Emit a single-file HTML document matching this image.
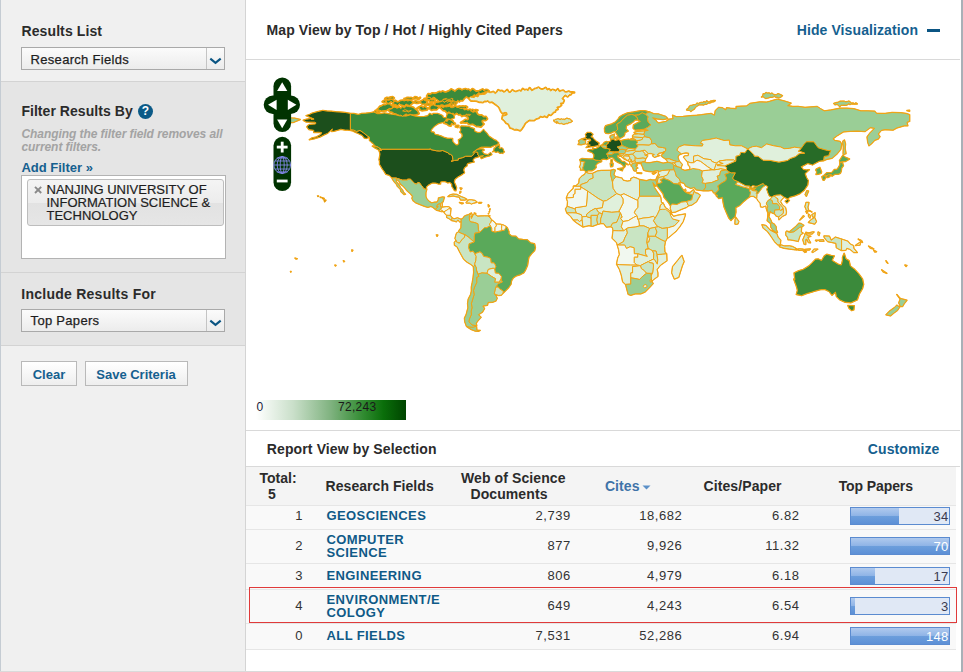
<!DOCTYPE html>
<html><head><meta charset="utf-8"><style>
html,body{margin:0;padding:0;}
body{width:963px;height:672px;overflow:hidden;position:relative;background:#fff;font-family:"Liberation Sans",sans-serif;}
</style></head><body>
<div style="position:absolute;left:0.00px;top:0.00px;width:245.00px;height:81.00px;background:#f0f0f0"></div>
<div style="position:absolute;left:0.00px;top:81.00px;width:245.00px;height:1.00px;background:#d3d3d3"></div>
<div style="position:absolute;left:0.00px;top:82.00px;width:245.00px;height:190.00px;background:#e5e5e5"></div>
<div style="position:absolute;left:0.00px;top:272.00px;width:245.00px;height:1.00px;background:#d3d3d3"></div>
<div style="position:absolute;left:0.00px;top:273.00px;width:245.00px;height:72.00px;background:#e5e5e5"></div>
<div style="position:absolute;left:0.00px;top:345.00px;width:245.00px;height:1.00px;background:#d3d3d3"></div>
<div style="position:absolute;left:0.00px;top:346.00px;width:245.00px;height:326.00px;background:#f0f0f0"></div>
<div style="position:absolute;left:0.00px;top:0.00px;width:1.00px;height:672.00px;background:#c5ccd3"></div>
<div style="position:absolute;left:245.00px;top:0.00px;width:1.00px;height:672.00px;background:#d4d4d4"></div>
<div style="position:absolute;top:24.15px;font-size:14px;line-height:14px;font-weight:bold;color:#2b2b2b;white-space:nowrap;letter-spacing:0.10px;left:21.50px;">Results List</div>
<div style="position:absolute;left:21.00px;top:47.00px;width:204.00px;height:23.00px;box-sizing:border-box;border:1px solid #a9a9a9;background:linear-gradient(#fbfbfb,#ececec)"></div>
<div style="position:absolute;left:206.00px;top:48.00px;width:1.00px;height:21.00px;background:#c4c4c4"></div>
<svg style="position:absolute;left:209px;top:57px" width="14" height="10" viewBox="0 0 14 10"><path d="M1.3,1.6 L6.5,5.9 L11.7,1.6" fill="none" stroke="#0b5583" stroke-width="2.1"/></svg>
<div style="position:absolute;top:52.60px;font-size:13px;line-height:13px;font-weight:normal;color:#1e1e1e;white-space:nowrap;letter-spacing:0.30px;left:30.60px;-webkit-text-stroke:0.25px #1e1e1e;">Research Fields</div>
<div style="position:absolute;top:103.65px;font-size:14px;line-height:14px;font-weight:bold;color:#2b2b2b;white-space:nowrap;letter-spacing:0.05px;left:21.40px;">Filter Results By</div>
<div style="position:absolute;left:138px;top:104px;width:15px;height:15px;border-radius:50%;background:#0b5a87;color:#fff;font-size:12px;font-weight:bold;line-height:15px;text-align:center">?</div>
<div style="position:absolute;top:128.34px;font-size:12px;line-height:12px;font-weight:bold;color:#a3a3a3;white-space:nowrap;font-style:italic;letter-spacing:-0.06px;left:21.40px;">Changing the filter field removes all</div>
<div style="position:absolute;top:141.34px;font-size:12px;line-height:12px;font-weight:bold;color:#a3a3a3;white-space:nowrap;font-style:italic;letter-spacing:-0.06px;left:21.40px;">current filters.</div>
<div style="position:absolute;top:161.00px;font-size:13px;line-height:13px;font-weight:bold;color:#15608f;white-space:nowrap;left:21.40px;">Add Filter &raquo;</div>
<div style="position:absolute;left:21.00px;top:175.00px;width:205.00px;height:84.00px;box-sizing:border-box;border:1px solid #b3b3b3;background:#fff"></div>
<div style="position:absolute;left:27.00px;top:179.00px;width:197.00px;height:46.50px;box-sizing:border-box;border:1px solid #bdbdbd;border-radius:3px;background:linear-gradient(#f4f4f4 0%,#ececec 50%,#e2e2e2 51%,#e6e6e6 100%)"></div>
<svg style="position:absolute;left:33px;top:185px" width="10" height="10"><path d="M2,1.8 L8.2,8 M8.2,1.8 L2,8" stroke="#8a8a8a" stroke-width="1.9"/></svg>
<div style="position:absolute;top:183.20px;font-size:13px;line-height:13px;font-weight:normal;color:#1e1e1e;white-space:nowrap;left:46.50px;-webkit-text-stroke:0.2px #1e1e1e;">NANJING UNIVERSITY OF</div>
<div style="position:absolute;top:195.90px;font-size:13px;line-height:13px;font-weight:normal;color:#1e1e1e;white-space:nowrap;left:46.50px;-webkit-text-stroke:0.2px #1e1e1e;">INFORMATION SCIENCE &amp;</div>
<div style="position:absolute;top:208.60px;font-size:13px;line-height:13px;font-weight:normal;color:#1e1e1e;white-space:nowrap;left:46.50px;-webkit-text-stroke:0.2px #1e1e1e;">TECHNOLOGY</div>
<div style="position:absolute;top:286.65px;font-size:14px;line-height:14px;font-weight:bold;color:#2b2b2b;white-space:nowrap;letter-spacing:0.25px;left:21.30px;">Include Results For</div>
<div style="position:absolute;left:21.00px;top:309.00px;width:204.00px;height:22.50px;box-sizing:border-box;border:1px solid #a9a9a9;background:linear-gradient(#fbfbfb,#ececec)"></div>
<div style="position:absolute;left:206.00px;top:310.00px;width:1.00px;height:20.50px;background:#c4c4c4"></div>
<svg style="position:absolute;left:209px;top:319px" width="14" height="10" viewBox="0 0 14 10"><path d="M1.3,1.6 L6.5,5.9 L11.7,1.6" fill="none" stroke="#0b5583" stroke-width="2.1"/></svg>
<div style="position:absolute;top:314.30px;font-size:13px;line-height:13px;font-weight:normal;color:#1e1e1e;white-space:nowrap;letter-spacing:0.30px;left:30.60px;-webkit-text-stroke:0.25px #1e1e1e;">Top Papers</div>
<div style="position:absolute;left:21.00px;top:361.00px;width:56.00px;height:24.50px;box-sizing:border-box;border:1px solid #b9b9b9;background:linear-gradient(#ffffff,#eeeeee)"></div>
<div style="position:absolute;left:21px;width:56px;top:368.00px;font-size:13px;line-height:13px;font-weight:bold;color:#15608f;text-align:center;white-space:nowrap">Clear</div>
<div style="position:absolute;left:85.00px;top:361.00px;width:102.50px;height:24.50px;box-sizing:border-box;border:1px solid #b9b9b9;background:linear-gradient(#ffffff,#eeeeee)"></div>
<div style="position:absolute;left:85px;width:102px;top:368.00px;font-size:13px;line-height:13px;font-weight:bold;color:#15608f;text-align:center;white-space:nowrap">Save Criteria</div>
<div style="position:absolute;left:961.00px;top:0.00px;width:2.00px;height:672.00px;background:#a9b0b7"></div>
<div style="position:absolute;top:23.15px;font-size:14px;line-height:14px;font-weight:bold;color:#2b2b2b;white-space:nowrap;letter-spacing:0.12px;left:266.50px;">Map View by Top / Hot / Highly Cited Papers</div>
<div style="position:absolute;top:23.15px;font-size:14px;line-height:14px;font-weight:bold;color:#15608f;white-space:nowrap;letter-spacing:0.10px;left:796.70px;">Hide Visualization</div>
<div style="position:absolute;left:927.00px;top:28.50px;width:13.00px;height:3.50px;background:#0b5583"></div>
<div style="position:absolute;left:246.00px;top:59.00px;width:714.00px;height:1.00px;background:#d9d9d9"></div>
<div style="position:absolute;left:246px;top:60px;width:714px;height:370px;overflow:hidden"><svg width="714" height="370" viewBox="246 60 714 370"><g stroke="#f2a312" stroke-width="1" stroke-linejoin="round"><path fill="none" stroke-width="1.5" d="M381.7,149.2L430.2,149.2L430.2,148.5L430.9,149.6L436.6,150.8L439.9,151.0L442.7,150.5L448.3,152.9L448.6,153.8L450.4,154.3L452.3,155.7L453.0,159.7L451.2,161.4L454.5,160.4L458.4,160.0L458.0,158.8L462.7,157.6L465.7,156.2L471.4,156.2L472.8,155.3L474.1,153.2L475.5,152.0L477.2,152.2L477.9,152.6L477.9,155.0L479.3,156.2L479.3,156.6L476.2,157.4L474.1,158.3L472.8,160.4L473.9,161.4L474.2,162.0L471.4,162.5L468.0,163.4L467.1,163.9L467.1,165.8L465.5,166.8L464.5,167.5L463.6,170.1L464.5,172.8L462.7,174.0L460.3,175.5L458.0,176.8L454.9,179.2L454.2,182.0L455.6,185.0L456.6,187.9L455.9,190.7L454.5,190.5L453.5,188.8L451.9,186.3L451.8,184.1L450.0,182.3L447.9,182.9L445.3,181.6L441.8,181.6L440.4,182.0L440.6,183.9L438.3,183.9L435.7,183.0L432.6,182.9L430.9,183.6L427.9,185.3L426.3,187.0L426.7,189.5L423.4,188.6L422.7,186.7L421.3,185.3L419.4,182.7L417.6,182.7L416.6,184.1L414.8,183.6L413.6,182.5L410.5,179.2L407.5,179.2L407.5,180.1L402.5,180.1L396.0,178.0L392.0,178.0L389.6,175.4L385.9,174.3L383.8,170.8L382.6,169.3L381.7,167.9L380.3,165.3L379.5,164.2L379.6,161.4L379.1,159.7L380.0,154.1L379.5,151.9L378.8,150.3L381.4,150.6L382.1,149.2ZM350.4,113.4L350.4,129.6L353.9,130.1L356.5,131.5L360.0,130.4L363.4,132.7L367.8,136.2L369.5,137.2L366.4,138.4L364.3,138.1L362.2,135.3L360.0,134.4L358.2,133.4L356.0,132.5L352.5,130.8L347.8,130.1L345.2,130.1L340.8,129.2L338.2,130.1L333.8,131.3L331.6,131.5L332.4,128.9L329.5,131.5L327.4,133.4L323.7,135.0L319.9,137.0L314.1,138.8L309.3,139.7L312.1,137.9L316.4,137.0L321.1,134.3L321.6,132.5L318.2,132.2L313.8,132.5L313.8,130.3L308.9,129.6L307.7,128.0L306.8,126.9L307.7,125.7L309.4,124.5L315.5,124.0L315.9,122.8L314.7,122.2L308.6,122.1L306.0,121.9L303.2,120.3L306.5,119.3L310.3,118.6L311.2,119.5L314.1,119.1L310.7,117.5L306.0,115.6L309.4,114.6L312.1,113.2L317.3,111.8L322.9,110.4L326.9,111.1L331.2,111.3L335.6,111.8L339.9,112.1L345.2,112.5ZM479.3,156.2L477.9,155.0L477.9,152.6L477.2,152.2L475.5,152.0L474.1,153.2L472.8,155.3L471.4,156.2L465.7,156.2L462.7,157.6L458.0,158.8L458.4,160.0L454.5,160.4L451.2,161.4L453.0,159.7L452.3,155.7L450.4,154.3L448.6,153.8L448.3,152.9L442.7,150.5L439.9,151.0L436.6,150.8L430.9,149.6L430.2,148.5L430.2,149.2L381.7,149.2L381.2,149.1L379.1,147.8L377.4,146.8L374.8,145.8L373.4,143.7L371.6,142.3L369.5,140.5L369.5,137.2L367.8,136.2L363.4,132.7L360.0,130.4L356.5,131.5L353.9,130.1L350.4,129.6L350.4,113.4L353.9,113.5L358.2,114.6L361.7,113.4L366.1,113.2L370.4,112.7L373.9,112.1L377.4,113.7L380.9,113.7L384.3,113.0L390.4,114.1L395.7,114.8L399.2,115.8L406.1,116.1L410.5,114.8L414.8,116.1L419.2,116.7L424.4,116.5L427.9,115.8L429.6,113.5L432.3,114.8L433.1,113.5L437.5,113.5L440.1,114.4L442.7,115.6L443.1,117.5L446.2,117.9L447.1,114.4L448.8,113.0L452.3,113.9L454.0,115.8L454.4,117.9L450.5,119.3L446.5,118.8L445.3,120.8L443.6,122.2L440.1,123.1L438.0,123.8L435.2,125.7L433.1,127.5L431.4,129.7L431.0,131.8L434.0,132.3L434.9,134.4L438.3,135.1L441.0,136.0L443.6,137.2L447.1,138.3L450.5,138.4L452.6,138.6L452.6,141.4L454.0,143.1L455.8,144.9L457.9,144.9L458.9,143.1L458.4,140.0L461.0,138.3L462.4,136.2L461.9,133.6L459.8,132.2L461.0,130.1L460.1,127.5L461.0,126.1L465.4,126.2L468.8,126.4L471.4,127.8L474.4,128.7L474.6,131.3L476.7,132.2L478.9,132.7L481.0,132.2L482.8,130.4L483.6,129.6L484.9,131.3L487.1,133.6L488.9,136.2L491.5,137.9L494.1,139.7L496.2,140.5L498.8,143.1L496.4,144.9L493.6,145.8L490.6,147.2L485.4,147.0L481.0,147.2L478.4,148.5L474.9,151.2L472.7,152.7L476.7,149.4L481.0,148.9L483.6,149.2L484.2,150.1L481.9,151.0L483.1,152.7L484.0,153.9L488.0,154.8L490.6,152.7L491.8,154.5L489.7,155.7L485.4,156.9L481.4,158.6L480.7,157.3L483.6,155.7L481.0,155.9ZM372.3,146.1L378.2,147.2L381.2,150.3L378.6,149.9L374.4,147.5ZM492.7,151.7L493.9,150.8L494.1,149.2L494.2,148.0L495.6,147.7L495.8,146.6L497.1,146.1L498.3,145.6L499.3,144.7L499.5,146.3L498.8,147.7L500.0,148.4L501.6,147.9L502.8,148.7L503.3,149.8L503.6,150.9L504.4,151.9L503.2,152.2L502.8,153.4L501.7,152.9L500.5,153.2L499.3,152.9L498.4,151.7L497.3,151.8L496.1,152.3L495.0,151.8L493.8,151.2ZM388.7,110.0L390.4,111.8L392.5,112.0L393.9,113.4L395.8,113.7L397.5,114.5L399.2,115.3L400.9,115.2L402.7,116.3L404.4,115.0L406.1,113.9L407.9,115.1L409.9,114.2L411.9,114.7L414.0,114.9L415.6,114.6L417.2,114.2L418.7,113.5L417.4,110.9L415.8,109.9L414.4,108.8L413.1,107.4L411.0,106.8L408.7,106.6L406.3,106.1L404.4,107.8L402.7,106.8L400.8,108.5L399.2,107.4L396.9,108.2L394.8,107.1L393.1,107.5L391.6,109.0L389.6,108.3ZM377.4,109.4L378.8,108.1L380.0,106.6L381.8,106.1L383.3,105.0L385.2,105.0L387.4,104.0L389.4,104.1L391.3,105.7L393.0,106.6L394.8,106.9L393.0,106.5L391.9,108.2L390.5,109.2L388.7,108.8L386.1,110.4L383.9,110.6L381.7,110.9L379.5,110.2ZM481.0,126.8L482.2,125.3L483.6,124.0L482.0,122.6L481.9,120.5L483.6,119.9L485.7,120.2L487.1,118.8L485.9,116.8L483.6,117.0L481.8,115.4L479.3,115.3L477.4,114.5L476.7,112.7L475.1,111.6L473.0,112.3L471.4,111.3L470.1,109.6L467.9,110.2L466.2,109.5L464.2,110.0L463.1,107.3L461.0,108.1L459.6,106.6L457.5,106.9L455.8,106.4L454.2,107.0L452.7,107.6L451.1,107.6L449.5,106.5L447.9,106.6L446.4,106.9L444.8,106.7L443.3,107.7L441.6,106.8L440.1,107.4L441.8,108.6L443.1,110.3L445.3,110.6L447.1,112.7L449.2,111.7L451.1,113.6L453.2,113.2L454.7,114.3L456.9,112.9L458.4,114.4L460.7,114.2L461.9,116.1L464.0,115.1L466.2,116.1L467.7,116.8L468.8,117.9L468.0,120.0L465.6,119.7L463.6,121.0L461.0,122.6L463.2,122.2L465.4,122.6L467.4,122.2L468.7,124.0L470.6,124.3L472.9,123.9L474.9,125.2L476.5,126.2L478.4,126.2ZM439.2,101.3L441.0,101.1L442.7,101.0L444.4,102.3L446.2,101.0L447.9,102.4L449.7,100.4L451.4,101.7L453.0,100.3L454.6,102.6L456.1,101.9L457.7,100.3L459.3,101.5L460.3,100.3L462.5,100.5L463.5,99.2L464.5,97.9L466.4,96.5L468.6,97.9L470.6,97.0L472.5,96.1L474.1,94.7L475.8,95.2L477.3,94.2L478.6,92.6L480.5,93.6L482.1,93.1L483.6,92.6L485.2,91.5L487.0,91.3L488.9,91.2L487.4,90.0L485.9,89.7L484.1,91.0L482.7,89.3L481.0,90.2L479.3,90.9L477.5,91.4L475.8,91.4L474.1,90.0L472.3,89.0L470.5,91.2L468.8,89.6L467.1,89.8L465.3,89.0L463.6,89.4L461.9,90.3L460.1,89.1L458.3,89.0L456.6,90.1L454.9,91.6L453.2,90.4L451.3,89.3L449.7,90.7L448.0,91.5L446.3,92.3L444.5,92.2L442.7,91.4L441.0,92.2L439.2,91.8L437.1,92.9L434.9,93.5L432.5,93.2L430.5,94.4L428.2,94.1L427.0,96.1L428.3,97.6L429.9,97.5L431.2,98.6L433.1,97.9L435.3,98.6L437.5,99.6ZM434.9,104.5L436.4,105.9L438.0,105.4L439.5,105.5L441.1,104.8L442.7,104.8L444.5,105.6L446.2,105.0L447.9,104.7L449.7,103.5L451.4,105.4L453.1,103.5L454.9,104.6L456.6,102.7L455.1,101.2L453.4,100.9L451.3,102.5L449.7,101.5L447.9,100.2L446.2,101.0L444.5,102.2L442.7,100.5L441.0,101.7L439.2,102.0L437.5,102.6L435.7,102.2ZM393.1,103.9L394.6,104.2L396.1,104.7L397.6,105.5L399.4,103.6L400.9,104.8L402.7,105.1L404.5,105.8L406.1,104.0L407.9,105.0L409.7,105.3L411.3,103.9L413.1,102.6L411.6,101.3L410.0,100.2L407.9,101.0L406.1,100.3L404.4,100.9L402.6,100.5L400.8,100.7L399.2,101.7L397.1,102.2L395.1,100.9L393.1,101.9ZM417.4,108.3L419.3,107.4L420.4,109.8L421.9,110.4L423.6,110.1L425.3,110.0L426.9,109.7L427.9,108.3L425.9,107.9L425.3,106.0L423.5,107.7L421.1,106.3L419.2,107.1ZM429.6,108.3L431.6,109.9L434.0,109.2L436.6,109.5L438.3,107.4L436.6,105.7L434.9,105.8L433.1,104.7L431.4,105.7L430.3,106.8ZM444.4,123.1L446.1,123.5L447.5,124.2L448.8,125.2L450.6,125.7L451.5,123.1L453.5,124.3L454.9,123.5L453.3,122.5L452.4,120.7L450.5,120.0L448.7,119.1L447.2,121.5L445.3,120.5ZM419.2,102.2L420.9,102.5L422.5,103.9L424.3,104.0L426.2,103.6L427.0,101.3L425.3,100.8L423.7,99.8L421.8,100.8ZM382.6,101.7L384.3,102.2L386.2,100.9L387.7,103.7L389.6,102.6L390.9,101.3L392.9,102.8L394.4,102.1L395.7,100.8L393.5,101.1L392.2,99.4L390.6,99.7L389.1,100.2L387.5,100.2L385.9,100.4L384.3,100.5ZM424.4,98.7L426.2,98.5L427.9,99.5L429.6,100.0L431.4,99.6L433.3,97.9L435.7,98.4L433.9,97.0L431.5,98.8L429.6,97.3L427.7,97.1L426.5,99.5ZM412.2,98.7L414.3,98.4L416.3,98.1L418.3,99.1L420.1,97.7L418.1,98.8L416.6,97.2L414.8,97.0L413.8,98.2ZM455.8,126.6L457.5,127.1L458.4,125.9L456.6,125.7ZM404.4,98.7L405.7,99.4L407.2,99.0L408.6,99.1L409.9,99.9L411.3,99.6L412.4,98.4L414.0,98.2L412.5,98.5L411.2,97.8L409.8,98.1L408.4,97.8L407.0,97.7L405.8,98.6ZM427.0,100.5L428.9,99.9L430.4,101.5L432.3,101.2L433.9,101.4L434.9,100.1L433.1,99.8L431.4,100.0L429.6,99.6ZM442.7,99.6L444.2,99.1L445.7,99.4L447.0,100.5L448.5,100.4L449.9,100.7L451.4,100.5L453.2,99.1L451.8,98.3L450.3,99.2L448.9,99.4L447.5,99.2L446.2,98.4L444.5,99.1ZM385.2,98.7L386.6,98.7L388.0,99.6L389.4,98.5L390.8,98.8L392.2,99.1L393.9,98.0L392.6,97.1L391.2,97.3L389.8,97.6L388.3,98.2L387.0,97.7ZM413.1,102.2L414.8,102.4L416.5,103.0L418.3,102.9L420.1,101.9L418.5,102.4L417.1,101.8L415.7,101.2L414.4,101.7ZM425.3,104.3L426.7,104.4L428.2,105.0L429.6,104.8L431.0,104.2L432.3,103.6L430.5,103.8L428.7,103.9L427.0,103.1ZM456.6,107.4L458.1,107.3L459.4,108.0L460.8,108.5L462.2,108.3L463.6,108.1L465.6,108.3L467.1,107.1L465.8,106.3L464.3,106.8L463.0,106.2L461.5,106.6L460.1,106.6L458.3,106.7ZM470.6,110.9L472.3,111.2L474.1,110.9L475.8,111.3L477.5,110.2L475.8,110.0L474.0,110.7L472.3,109.7ZM402.6,110.9L404.0,111.2L405.4,111.5L406.8,111.1L408.2,112.1L409.6,111.4L411.3,110.4L409.9,110.9L408.5,111.0L407.1,110.6L405.8,109.8L404.4,109.9ZM374.8,111.8L376.2,112.7L377.7,111.3L379.1,112.1L380.0,111.1L378.6,110.8L377.0,111.7L375.6,110.7ZM465.4,115.3L466.9,114.7L468.2,115.8L469.7,115.6L470.6,114.6L469.1,114.3L467.7,114.4L466.2,114.2ZM449.7,103.9L451.4,103.9L453.2,104.3L454.9,103.6L453.5,102.9L452.0,103.1L450.5,103.3ZM491.5,94.4L493.3,94.2L495.0,94.7L495.8,93.8L494.0,94.4L492.4,93.5ZM520.2,130.4L518.5,129.8L516.7,129.2L514.4,129.4L512.4,128.3L510.3,127.8L509.4,125.7L508.4,123.8L506.3,123.1L504.5,120.5L502.3,118.8L502.8,116.1L505.0,115.6L507.2,114.8L506.8,112.7L504.9,112.3L502.7,113.3L501.1,111.4L500.2,109.5L499.3,107.4L497.6,105.7L495.8,104.4L494.1,103.1L492.1,101.8L489.7,102.2L488.1,100.6L486.3,101.1L484.6,101.0L482.8,102.2L481.0,101.9L479.0,101.9L477.2,101.0L475.2,100.8L473.2,100.8L471.1,100.7L469.7,99.1L468.8,97.9L470.4,96.9L472.4,97.4L474.3,97.6L475.8,96.1L477.9,97.0L479.2,94.7L481.0,94.6L482.8,94.4L484.6,94.4L486.2,93.6L487.7,91.8L489.7,92.7L491.5,92.6L493.1,91.8L495.2,93.6L496.8,92.5L498.2,90.2L500.2,91.2L501.9,90.9L503.7,92.3L505.4,91.7L507.2,89.9L508.9,92.6L510.6,92.4L512.4,90.2L514.1,91.4L516.0,91.9L517.7,91.2L519.3,90.6L521.2,91.4L522.7,88.9L524.6,90.2L526.3,89.7L528.1,90.7L529.7,88.0L531.6,90.8L533.3,90.0L535.0,88.8L536.7,88.5L538.4,87.6L540.3,89.0L542.0,89.5L543.7,89.1L545.6,87.8L547.2,90.1L549.0,89.2L550.6,91.1L552.5,89.7L554.1,90.2L555.8,91.3L557.8,89.2L559.3,91.7L561.2,90.9L563.1,90.5L564.8,92.1L566.7,92.2L568.7,91.5L570.4,92.4L572.3,92.4L574.2,92.5L572.0,92.5L570.7,94.4L569.0,94.8L567.6,96.5L565.3,94.9L563.8,96.1L562.0,98.7L563.8,100.5L562.9,102.9L560.3,103.1L561.2,105.2L559.2,106.6L556.8,107.1L557.7,109.2L555.6,109.8L555.1,111.8L553.2,112.2L552.1,113.8L550.7,114.9L548.5,114.2L546.9,117.0L544.6,115.8L542.5,116.8L540.3,116.1L538.5,118.1L535.9,118.8L534.0,120.3L531.5,120.2L529.2,120.0L527.2,121.4L525.1,123.1L523.7,125.7L522.0,128.3ZM553.7,120.3L554.8,120.4L555.6,119.4L556.7,119.3L557.7,118.9L558.9,119.1L560.1,119.7L561.3,119.0L562.5,119.4L563.8,119.3L564.9,119.8L565.9,118.6L567.0,118.2L568.1,118.8L569.5,119.0L570.7,119.6L571.1,120.8L572.3,121.2L571.1,122.0L569.9,122.6L568.7,122.3L567.9,123.4L566.8,123.2L565.8,123.6L564.8,123.8L563.8,124.2L562.7,123.8L561.7,123.2L560.5,123.5L559.4,123.5L558.0,122.6L556.5,123.1L557.7,121.7L556.5,121.3L555.3,122.1L554.2,121.4ZM392.0,178.0L396.0,178.0L402.5,180.1L407.5,180.1L407.5,179.2L410.5,179.2L413.6,182.5L414.8,183.6L416.6,184.1L417.6,182.7L419.4,182.7L421.3,185.3L422.7,186.7L423.4,188.6L426.7,189.5L425.8,192.8L425.8,196.3L426.7,198.7L428.8,201.2L431.4,202.9L434.9,202.2L437.0,202.2L438.3,200.1L438.5,198.0L442.7,197.1L444.4,197.3L443.6,199.8L443.1,201.9L442.2,202.4L440.8,203.6L437.5,204.5L436.8,206.6L438.3,206.7L435.4,209.3L433.1,207.4L430.9,206.4L427.9,207.3L424.4,206.2L420.1,204.5L415.7,202.7L413.1,200.6L412.0,198.4L412.6,196.3L410.5,193.7L407.0,190.7L405.3,188.4L403.2,186.2L400.5,184.1L398.8,180.9L396.0,179.2L396.4,181.8L398.6,184.4L400.5,187.6L402.6,190.2L403.5,192.3L405.4,194.2L404.0,194.5L400.9,191.4L400.4,189.3L397.1,186.0L396.9,184.8L394.3,181.8L392.7,179.6ZM435.4,209.3L438.3,206.7L436.8,206.6L437.5,204.5L440.8,203.6L440.6,206.9L442.4,207.3L440.4,209.5L439.0,210.7L436.6,210.2ZM440.8,203.6L442.2,202.4L442.2,206.7L440.6,206.9ZM440.4,209.5L442.4,207.3L446.2,206.7L448.8,206.9L450.9,208.5L448.5,209.0L446.2,210.6L443.9,211.8L443.2,211.4ZM439.0,210.7L440.4,209.5L443.2,211.4L441.3,211.6ZM443.9,211.8L446.2,210.6L448.5,209.0L450.9,208.5L450.5,212.8L450.2,215.4L446.7,215.3L444.8,213.3ZM446.7,215.3L450.2,215.4L452.1,217.9L451.6,220.5L449.7,218.9L446.7,217.4ZM452.1,217.9L454.0,218.9L457.5,217.9L461.2,219.4L461.3,221.5L459.8,221.9L457.9,219.8L456.3,221.7L454.5,221.0L451.6,220.5ZM488.9,217.2L489.9,215.8L488.2,216.0ZM488.3,213.7L488.7,213.3L488.5,213.9ZM489.2,211.6L489.6,211.3L489.4,212.0ZM489.6,209.5L490.1,208.8L489.7,210.2ZM488.3,206.7L489.4,205.9L488.7,206.9ZM488.0,205.0L488.5,204.8L488.2,205.2ZM474.2,213.0L475.8,213.5L474.9,213.5ZM447.9,196.5L450.5,194.7L453.2,194.2L456.6,194.4L461.0,196.6L464.5,198.0L466.9,199.4L464.5,199.9L460.6,199.9L459.3,197.1L455.8,196.6L453.2,195.8L449.7,196.5ZM466.2,202.5L468.8,199.9L471.4,199.9L474.9,200.5L477.0,202.2L474.1,202.9L471.4,203.9L469.7,202.9L466.4,202.9ZM459.4,202.5L463.3,203.2L461.9,203.8ZM478.9,202.4L481.7,202.5L481.0,203.2L478.9,203.2ZM460.1,187.9L461.9,188.3L461.0,189.7ZM460.1,191.4L461.0,191.9L459.8,193.3ZM506.1,226.9L507.2,227.6L508.9,231.5L508.9,233.7L511.5,236.0L515.9,236.3L518.5,239.0L522.8,239.5L527.2,239.8L530.7,243.0L534.5,243.7L535.4,247.7L534.5,250.8L531.5,253.8L528.9,257.2L528.1,261.6L527.5,265.4L525.4,270.3L523.7,272.9L520.2,274.7L516.7,275.7L513.3,277.8L511.5,280.8L511.0,284.2L508.6,287.7L506.3,290.0L503.0,293.3L503.3,291.2L499.3,288.6L498.4,287.0L495.7,287.2L498.4,283.4L502.3,282.0L500.9,279.2L501.4,276.4L498.8,273.4L495.3,273.1L494.6,269.1L495.8,266.3L494.3,263.0L491.1,262.8L490.6,258.5L488.0,257.2L483.6,256.4L482.2,253.6L480.0,251.8L474.8,253.8L473.0,251.1L470.2,252.0L468.5,247.7L469.0,243.7L474.1,241.9L474.2,236.7L474.9,232.9L479.3,232.5L479.6,232.5L484.5,227.6L486.8,227.6L490.4,225.5L491.8,228.5L491.8,231.1L495.0,232.0L498.4,231.3L501.9,230.6ZM491.5,219.8L494.1,221.9L496.2,224.1L496.4,225.9L495.0,227.6L495.0,232.0L491.8,231.1L491.8,228.5L490.4,225.5L489.2,224.1L490.6,222.8ZM496.2,224.1L500.2,224.3L501.9,224.7L501.6,228.3L501.9,230.6L498.4,231.3L495.0,232.0L495.0,227.6L496.4,225.9ZM501.9,224.7L502.8,224.8L505.4,226.1L506.1,226.9L504.5,230.2L501.9,230.6L501.6,228.3ZM471.4,213.0L472.3,215.4L470.8,216.3L471.4,218.6L473.2,214.9L474.4,213.9L477.5,216.3L481.0,216.1L484.5,216.0L488.0,216.0L489.7,217.5L491.5,219.8L490.6,222.8L489.2,224.1L490.4,225.5L486.8,227.6L484.5,227.6L479.6,232.5L479.3,232.5L478.4,229.7L477.9,223.8L474.1,222.4L470.6,221.9L469.7,220.7L469.2,217.2L469.7,215.4ZM461.2,219.4L463.1,218.2L464.5,216.1L466.6,215.3L468.8,214.6L471.4,213.0L469.7,215.4L469.2,217.2L469.7,220.7L470.6,221.9L474.1,222.4L477.9,223.8L478.4,229.7L479.3,232.5L474.9,232.9L474.2,236.7L474.1,241.9L470.6,239.0L468.0,236.7L465.0,234.8L461.0,233.2L458.4,232.0L459.3,230.2L461.0,228.0L461.2,223.3ZM456.1,240.5L455.1,238.4L455.8,235.5L456.6,233.2L458.4,232.0L461.0,233.2L465.0,234.8L464.5,237.2L461.9,239.8L459.3,243.3L457.5,242.4L456.6,242.1ZM456.1,240.5L456.6,242.1L457.5,242.4L459.3,243.3L461.9,239.8L464.5,237.2L465.0,234.8L468.0,236.7L470.6,239.0L474.1,241.9L469.0,243.7L468.5,247.7L470.2,252.0L473.0,251.1L474.8,253.8L476.2,256.4L475.8,260.7L474.9,263.3L474.9,265.1L473.4,266.5L471.4,264.7L467.1,262.1L463.6,259.0L461.9,255.9L459.3,251.1L457.2,246.8L454.5,245.1L454.4,242.4ZM474.8,253.8L480.0,251.8L482.2,253.6L483.6,256.4L488.0,257.2L490.6,258.5L491.1,262.8L494.3,263.0L495.8,266.3L494.6,269.1L493.2,268.2L488.3,269.4L487.0,273.3L481.9,272.9L477.9,274.3L476.7,271.2L476.3,267.7L474.9,265.1L474.9,263.3L475.8,260.7L476.2,256.4ZM494.6,269.1L495.3,273.1L498.8,273.4L501.4,276.4L500.9,279.2L499.3,282.2L494.6,282.2L495.5,278.7L491.5,276.4L487.0,273.3L488.3,269.4L493.2,268.2ZM503.0,293.3L503.3,291.2L499.3,288.6L498.4,287.0L495.7,287.2L494.6,292.1L494.3,293.8L496.7,294.7L498.4,295.4L501.1,295.2ZM476.7,271.2L477.9,274.3L481.9,272.9L487.0,273.3L491.5,276.4L495.5,278.7L494.6,282.2L499.3,282.2L500.9,279.2L502.3,282.0L498.4,283.4L495.7,287.2L494.6,292.1L494.3,293.8L496.4,296.4L497.1,298.4L495.7,301.1L492.4,302.2L488.0,302.4L487.5,305.2L482.8,306.0L484.5,308.6L482.4,312.1L478.4,314.7L481.0,317.3L477.9,320.8L476.2,323.1L476.7,325.7L472.3,325.2L470.6,323.4L468.8,321.7L469.7,318.2L471.3,314.7L471.1,311.2L472.0,307.8L471.4,303.4L472.7,299.1L474.1,294.7L473.5,290.3L474.6,286.9L476.7,282.5L476.7,277.3L478.8,276.4ZM473.4,266.5L474.9,265.1L476.3,267.7L476.7,271.2L478.8,276.4L476.7,277.3L476.7,282.5L474.6,286.9L473.5,290.3L474.1,294.7L472.7,299.1L471.4,303.4L472.0,307.8L471.1,311.2L471.3,314.7L469.7,318.2L468.8,321.7L470.6,323.4L472.3,325.2L476.7,325.7L474.1,327.3L470.6,327.8L466.6,326.6L464.8,321.7L464.5,318.2L466.2,314.7L467.1,311.2L468.0,307.8L467.6,303.4L468.3,299.1L470.6,294.7L471.4,291.2L471.4,286.9L472.3,282.5L473.2,277.3L473.7,272.1ZM476.5,326.2L476.8,330.2L480.2,330.4L478.4,331.3L474.9,330.9L471.4,329.5L467.1,326.9L473.2,327.3ZM324.1,199.9L326.0,200.3L324.6,201.7ZM322.0,197.7L324.2,198.4L323.2,198.9ZM320.2,197.0L321.3,197.5L320.4,197.5ZM317.6,195.9L318.5,196.1L318.0,196.5ZM436.4,234.9L437.8,235.1L437.1,236.3ZM334.9,265.1L336.1,265.4L335.4,266.0ZM351.8,249.9L352.8,250.3L352.1,251.3ZM343.4,260.7L344.5,261.3L343.8,261.8ZM295.0,258.1L297.2,258.8L295.9,259.0ZM290.5,271.4L291.1,271.5L290.8,272.1ZM580.5,161.6L580.7,164.0L580.1,165.8L579.5,167.0L580.7,168.1L580.5,170.1L583.1,169.8L582.9,167.5L583.8,165.4L584.0,163.2L585.2,162.1L581.7,161.3ZM580.5,161.6L581.7,161.3L585.2,162.1L584.0,163.2L583.8,165.4L582.9,167.5L583.1,169.8L584.9,170.5L586.2,171.9L588.2,170.7L592.2,170.7L594.8,169.1L596.3,167.2L595.5,165.8L597.4,163.2L601.6,161.6L601.6,160.7L598.6,160.4L596.0,160.2L592.9,159.0L588.2,159.0L582.1,158.5L579.8,159.7ZM592.9,159.0L596.0,160.2L598.6,160.4L601.6,160.7L601.4,159.5L603.8,159.0L606.5,159.5L609.1,158.3L607.5,156.0L608.2,154.6L606.5,154.1L609.2,151.7L610.3,149.2L607.1,148.4L606.1,148.4L603.3,147.7L600.4,145.6L598.6,147.2L596.3,148.4L594.3,148.7L592.7,148.0L593.2,149.9L590.8,149.6L588.2,149.9L587.8,151.0L592.2,152.6L593.9,154.5L593.9,156.9ZM611.0,159.7L612.5,159.9L612.2,162.5L611.0,162.0ZM600.4,145.6L603.3,147.7L606.1,148.4L606.6,147.3L606.8,146.1L606.3,145.8L604.7,145.1L601.9,145.1ZM601.9,145.1L604.7,145.1L606.3,145.8L606.5,144.4L608.2,143.7L608.5,141.9L606.1,141.6L604.2,142.4L603.0,144.2ZM606.5,144.4L606.3,145.8L606.8,146.1L606.6,147.3L607.1,148.4L610.3,149.2L609.2,151.7L612.7,151.9L614.3,151.9L618.6,151.9L620.0,149.6L617.3,147.0L622.1,145.6L621.4,143.0L620.7,140.7L618.6,139.7L615.2,140.5L613.2,139.1L611.0,139.0L610.8,141.2L608.5,141.9L608.2,143.7ZM611.0,139.0L613.2,139.1L614.3,137.9L613.9,136.2L614.5,134.1L612.5,135.0L610.3,135.7L610.1,137.9ZM615.2,137.4L617.4,136.9L617.9,137.7L616.9,139.0L615.5,138.4ZM606.5,154.1L608.2,154.6L611.7,154.6L614.3,152.9L612.7,151.9L609.2,151.7ZM612.7,151.9L614.3,152.9L617.4,152.7L619.9,153.6L624.7,153.6L625.8,151.0L625.6,149.9L622.1,149.2L620.0,149.6L618.6,151.9L614.3,151.9ZM608.2,154.6L607.5,156.0L609.1,158.3L611.3,157.3L613.4,158.0L615.2,160.6L617.8,162.3L621.3,163.9L623.5,165.8L623.2,168.4L624.9,166.7L625.6,164.0L628.2,164.7L626.5,163.5L624.2,161.6L621.8,161.4L619.7,158.8L617.8,157.6L617.4,155.5L619.9,155.2L619.9,153.6L617.4,152.7L614.3,152.9L611.7,154.6ZM617.6,168.8L623.2,167.9L622.3,170.7L620.4,170.0ZM610.3,163.2L613.1,163.2L612.7,166.5L610.6,166.7ZM586.1,147.5L589.9,146.8L594.3,146.3L598.4,145.4L599.0,143.0L596.3,141.4L593.4,138.8L592.5,137.2L590.8,137.0L592.9,134.4L590.8,132.5L587.3,132.5L585.5,134.4L586.2,136.5L585.2,137.7L587.3,139.1L590.3,139.0L590.8,140.7L588.0,141.8L588.9,143.1L586.9,144.4L590.4,145.1L588.2,145.8ZM586.4,139.7L585.5,138.4L583.3,138.4L582.1,139.7L585.0,140.4ZM585.5,143.7L585.5,141.8L585.0,140.4L582.1,139.7L583.3,138.4L581.2,139.1L578.6,140.9L579.5,143.1L578.1,144.4L581.2,144.7L585.0,143.7ZM604.5,128.3L604.7,131.8L605.8,133.2L608.2,133.6L610.8,133.0L614.3,131.3L615.2,131.8L617.8,129.2L617.3,126.6L616.9,124.0L620.4,122.2L623.0,119.1L627.4,115.3L631.7,114.4L634.3,115.3L638.7,114.9L642.2,112.8L645.6,114.4L646.5,113.2L650.0,112.1L644.8,110.7L640.9,110.7L633.5,112.1L627.4,113.0L622.1,115.3L619.5,117.0L617.8,119.6L615.2,122.2L611.7,124.0L605.6,125.7ZM615.2,131.8L616.6,133.6L618.3,136.7L618.5,138.1L620.9,137.9L623.9,136.2L624.7,134.4L624.9,132.7L628.2,131.0L626.0,128.9L626.5,125.7L630.0,124.0L633.5,121.7L634.8,120.0L638.0,120.0L636.9,117.0L634.3,115.3L631.7,114.4L627.4,115.3L623.0,119.1L620.4,122.2L616.9,124.0L617.3,126.6L617.8,129.2ZM638.0,120.0L640.4,121.4L638.7,122.2L633.5,124.9L633.1,128.3L635.2,130.1L639.5,129.7L644.4,129.2L647.4,127.5L650.9,125.0L648.3,122.2L647.4,118.8L648.3,116.7L645.6,114.4L642.2,112.8L638.7,114.9L634.3,115.3L636.9,117.0ZM620.7,140.7L624.7,139.7L628.4,139.3L630.3,139.8L635.7,139.8L636.9,140.7L637.6,142.8L636.4,143.7L637.1,144.9L638.0,146.1L635.4,149.1L630.0,148.4L628.7,148.4L625.6,147.0L622.1,145.6L621.4,143.0ZM617.3,147.0L622.1,145.6L625.6,147.0L628.7,148.4L625.6,149.9L622.1,149.2L620.0,149.6ZM625.6,149.9L628.7,148.4L630.0,148.4L635.4,149.1L634.5,150.3L630.8,150.6L627.4,151.3L625.8,151.0ZM625.8,151.0L627.4,151.3L630.8,150.6L634.5,150.3L635.9,151.2L632.6,154.1L628.7,154.6L625.6,154.5L624.7,153.6ZM619.9,153.6L624.7,153.6L623.0,155.3L619.9,155.2ZM619.9,155.2L623.0,155.3L624.7,153.6L625.6,154.5L628.7,154.6L629.1,156.2L623.9,155.9L623.5,157.4L626.5,159.7L628.2,160.7L623.9,158.8L622.1,157.1L620.9,155.9L619.5,156.2ZM623.9,155.9L629.1,156.2L630.1,158.0L629.4,158.8L628.2,160.7L626.5,159.7L623.5,157.4ZM628.7,154.6L632.6,154.1L635.2,156.9L635.2,159.3L635.0,160.9L631.7,161.6L631.4,159.7L629.4,158.8L630.1,158.0L629.1,156.2ZM628.2,160.7L629.4,158.8L631.4,159.7L630.1,161.6ZM630.1,161.6L631.7,161.6L632.4,163.5L631.7,165.3L629.8,164.4L629.8,161.8ZM631.7,161.6L635.0,160.9L636.1,162.7L632.4,163.5ZM631.7,165.3L632.4,163.5L636.1,162.7L641.3,162.0L642.0,163.4L637.8,163.5L635.7,164.0L637.3,165.1L635.4,166.0L636.6,166.8L637.8,168.1L636.1,168.6L636.4,171.0L635.0,171.0L633.8,170.5L633.1,168.8L632.9,167.5L631.2,166.0ZM636.9,172.8L641.8,173.1L641.3,173.6L637.1,173.3ZM635.2,157.6L637.8,158.5L643.0,157.8L645.8,158.5L644.8,161.4L641.8,162.0L641.3,162.0L636.1,162.7L635.0,160.9L635.2,159.3ZM632.6,154.1L635.9,151.2L639.4,151.3L642.3,150.6L645.1,153.6L645.0,155.3L647.7,155.9L645.8,158.5L643.0,157.8L637.8,158.5L635.2,157.6L635.2,156.9ZM642.3,150.6L644.8,150.1L648.3,153.6L645.1,155.3L645.1,153.6ZM636.9,131.5L644.8,131.0L643.9,134.4L638.2,133.9L634.0,132.5ZM632.6,135.7L634.3,134.3L638.2,133.9L643.9,134.4L645.1,136.7L642.3,137.6L632.6,137.0ZM632.6,137.0L642.3,137.6L642.7,139.1L640.4,140.2L636.9,140.7L635.7,139.8L632.9,138.4ZM630.3,139.8L635.7,139.8L632.9,138.4L630.8,139.0ZM636.9,140.7L640.4,140.2L642.7,139.1L642.3,137.6L645.1,136.7L649.8,137.7L651.7,140.9L651.4,143.8L649.1,145.2L643.0,144.9L637.1,144.9L636.4,143.7L637.6,142.8ZM635.4,149.1L638.0,146.1L637.1,144.9L643.0,144.9L649.1,145.2L651.4,143.8L655.2,143.5L657.8,146.8L662.5,147.5L665.7,148.2L665.7,151.0L662.7,152.4L658.7,153.2L657.0,155.0L659.6,155.5L654.4,157.3L652.6,155.7L654.4,154.5L650.9,153.4L648.3,153.6L644.8,150.1L642.3,150.6L639.4,151.3L635.9,151.2L634.5,150.3ZM641.5,164.9L642.5,166.7L643.6,170.1L645.3,170.7L649.1,171.4L652.6,171.7L656.4,170.5L659.1,171.0L659.6,171.5L662.2,170.5L669.7,170.0L674.0,169.8L673.5,166.7L674.0,165.4L671.8,163.0L668.3,162.3L663.1,163.2L657.0,161.4L650.0,162.8L646.5,162.8L644.8,162.1L641.8,162.0L641.3,163.7ZM652.3,173.5L656.3,172.4L653.5,174.3ZM646.5,129.7L644.4,129.2L647.4,127.5L650.9,125.0L648.3,122.2L647.4,118.8L648.3,116.7L645.6,114.4L646.5,113.2L650.0,112.1L653.5,113.7L658.7,114.1L665.7,116.5L667.8,118.6L663.1,119.5L657.8,118.9L652.6,117.7L653.5,118.8L656.1,120.3L656.6,121.7L658.7,123.1L662.2,122.2L666.2,121.4L669.2,119.3L673.2,118.8L672.6,115.3L676.1,116.7L683.1,116.5L690.1,115.8L697.0,115.3L701.4,114.8L707.5,113.9L711.0,113.5L714.5,115.3L715.3,110.9L718.8,107.4L722.3,107.8L725.8,110.0L726.6,107.8L730.1,108.3L736.2,108.8L736.2,106.6L746.7,106.0L750.2,103.4L759.7,102.0L766.7,102.2L770.2,101.3L777.2,99.2L784.1,101.0L791.1,103.1L787.6,105.7L792.8,106.6L798.1,106.4L805.0,107.4L810.3,107.1L817.2,106.6L819.8,108.3L824.2,110.9L831.2,110.0L839.9,108.3L846.8,108.3L853.8,108.8L860.8,110.9L867.8,110.9L874.7,111.3L876.5,113.4L885.2,113.5L892.1,112.5L900.9,112.8L906.1,113.5L909.6,114.7L909.6,121.4L906.9,122.2L907.8,125.7L904.3,125.7L896.5,128.0L893.0,130.1L885.2,129.6L881.3,130.3L878.2,133.9L879.9,136.7L878.2,139.0L874.7,140.2L872.1,143.1L869.0,145.8L867.8,142.3L867.1,137.0L869.5,133.6L874.7,128.3L870.4,127.5L865.1,131.5L857.3,131.0L850.3,131.3L843.4,131.8L836.4,136.2L832.9,138.8L834.7,140.5L839.9,141.4L841.6,144.0L840.8,149.2L837.3,153.6L832.0,158.3L826.8,159.3L823.5,160.7L824.2,156.4L828.6,155.7L830.6,150.5L827.7,150.6L823.3,149.4L818.1,147.8L813.8,141.9L806.8,141.8L805.0,143.1L801.2,148.4L798.9,147.8L794.6,147.2L789.4,148.4L784.1,148.7L780.7,147.0L773.7,145.8L766.7,144.0L761.5,147.7L756.3,146.3L752.8,146.6L747.6,148.9L741.5,145.8L735.4,145.8L729.8,144.9L729.3,140.2L724.0,140.5L716.2,138.1L709.2,139.5L702.3,140.5L700.5,143.1L703.1,144.0L702.3,146.1L695.3,145.8L690.1,145.4L684.0,144.9L678.7,147.0L677.0,150.1L677.9,151.0L681.4,153.8L678.7,155.2L677.9,157.1L678.7,159.7L679.6,161.6L677.0,161.6L672.6,160.2L669.2,158.8L665.7,159.0L663.1,157.4L661.3,155.7L662.2,154.5L664.5,152.7L662.7,152.4L665.7,151.0L665.7,148.2L662.5,147.5L657.8,146.8L655.2,143.5L651.4,143.8L651.7,140.9L649.8,137.7L645.1,136.7L643.9,134.4L644.8,131.0L648.3,130.3ZM284.2,115.3L289.4,117.9L294.6,118.2L300.2,119.6L297.2,120.8L292.9,122.6L289.4,122.2L284.2,120.8L282.4,121.4L282.4,114.7ZM686.6,110.0L687.3,108.8L688.8,108.1L689.2,106.6L690.5,105.5L692.1,105.4L693.6,104.8L695.7,104.8L697.0,103.1L698.6,103.6L699.9,102.8L701.3,102.4L702.7,102.6L704.0,101.7L705.5,102.5L706.8,100.8L708.3,102.3L709.7,101.7L711.1,100.9L712.6,101.9L714.0,101.6L715.3,100.6L713.5,100.5L712.0,101.0L711.0,102.6L709.5,103.0L707.9,103.0L706.7,104.3L705.1,104.1L703.7,104.9L702.1,104.7L700.5,104.8L698.9,104.8L697.7,105.7L696.5,106.5L695.3,107.4L694.3,109.1L692.7,110.0L690.9,111.4L689.7,110.3L688.1,110.2ZM761.5,97.0L763.2,96.5L764.5,97.7L765.8,98.4L767.3,98.1L768.8,97.7L770.2,97.1L771.8,97.3L773.2,96.9L774.6,96.1L775.8,97.2L777.5,97.2L778.9,97.9L780.9,97.0L782.4,95.6L781.0,94.9L779.5,94.3L778.1,93.7L776.3,94.8L774.7,94.8L773.2,94.3L771.9,93.1L770.5,93.9L769.0,92.9L767.6,93.3L766.1,92.6L764.7,93.9L763.2,93.8L762.9,95.7ZM833.8,103.4L835.0,104.7L837.2,104.2L838.6,105.4L839.9,106.6L841.0,105.2L842.6,105.2L844.2,105.1L845.9,105.2L847.4,104.8L848.6,103.6L850.0,104.5L851.5,103.7L852.9,104.1L854.4,103.8L855.9,102.9L857.3,103.9L855.8,104.0L854.3,104.1L853.1,102.9L851.5,103.4L850.3,102.2L848.9,101.1L847.4,101.6L845.8,102.0L844.4,101.3L842.9,101.2L841.4,101.3L839.9,101.3L838.5,102.2L836.9,102.5L835.3,102.9ZM909.6,110.3L909.6,111.3L906.9,110.6ZM285.1,110.0L287.7,110.9L282.4,111.3L282.4,110.3ZM843.4,154.5L846.0,153.6L845.1,148.4L845.5,144.0L844.4,140.0L842.8,141.4L843.4,147.5L843.2,153.6ZM665.7,159.0L669.2,158.8L672.6,160.2L677.0,161.6L674.4,162.8L671.8,163.0L668.3,162.3ZM671.8,163.0L674.4,162.8L677.0,166.7L674.0,165.4ZM674.4,162.8L677.0,161.6L679.6,161.6L682.2,164.6L681.0,167.7L677.0,166.7ZM674.0,165.4L673.5,166.7L674.0,169.8L675.3,172.8L676.1,176.2L679.3,178.9L680.5,182.3L684.0,183.2L685.7,186.0L690.9,188.4L694.2,187.4L696.2,189.8L703.3,190.7L705.7,187.2L705.4,183.4L702.1,182.7L703.3,179.9L701.6,176.2L702.4,170.8L698.8,169.4L692.7,168.4L690.1,169.6L684.8,170.5L681.4,169.1L681.0,167.7L677.0,166.7ZM669.7,170.0L674.0,169.8L675.3,172.8L676.1,176.2L679.3,178.9L680.5,182.3L679.1,182.3L678.6,184.1L673.9,183.7L669.2,180.4L663.9,178.5L663.6,176.4L667.4,174.7ZM658.4,172.2L658.5,174.3L659.6,174.5L658.7,176.2L658.5,177.6L663.6,176.4L667.4,174.7L669.7,170.0L662.2,170.5L659.6,171.5ZM657.1,176.9L658.7,176.2L659.6,174.5L658.5,174.3ZM655.8,180.1L657.1,176.9L658.5,177.6L657.8,179.7L657.0,183.2L656.8,183.2ZM658.5,177.6L663.6,176.4L663.9,178.5L660.5,179.7L662.2,182.3L659.6,183.4L657.0,183.2L657.8,179.7ZM659.6,183.4L662.2,182.3L660.5,179.7L663.9,178.5L669.2,180.4L673.9,183.7L678.6,184.1L680.5,185.8L682.2,188.4L684.5,191.4L685.7,192.3L692.7,195.1L691.8,199.8L686.6,201.5L681.4,202.2L677.0,204.5L671.8,204.1L670.6,206.0L668.3,202.4L663.9,197.1L663.1,193.7L660.5,190.2L657.8,186.7L656.8,185.0L657.0,183.4ZM670.6,206.0L671.8,204.1L677.0,204.5L681.4,202.2L686.6,201.5L688.5,205.7L686.6,207.3L681.4,209.3L675.3,212.0L671.8,212.5L670.4,208.5ZM686.6,201.5L691.8,199.8L692.7,195.1L694.1,191.2L695.3,192.8L697.9,193.5L700.2,195.4L697.9,199.1L696.5,201.7L694.4,203.2L691.8,205.0L688.5,205.7ZM685.7,192.3L690.1,192.6L693.6,189.7L694.1,191.2L692.7,195.1ZM684.5,191.4L685.9,190.7L685.4,189.1L684.7,190.0ZM679.1,182.3L680.5,185.0L678.6,184.1ZM703.3,179.9L701.6,176.2L702.4,170.8L708.4,170.1L714.1,169.8L717.9,169.3L720.6,168.6L726.5,169.8L720.6,171.0L719.7,175.4L717.1,176.2L718.5,179.7L711.8,182.5L705.4,183.4L702.1,182.7ZM703.3,190.7L708.4,190.7L712.2,190.2L713.6,192.8L715.7,193.0L718.8,189.8L717.9,185.8L721.4,183.2L725.8,180.6L726.6,178.0L724.9,174.5L730.1,172.4L726.6,170.1L726.5,169.8L720.6,171.0L719.7,175.4L717.1,176.2L718.5,179.7L711.8,182.5L705.4,183.4L705.7,187.2ZM715.7,193.0L715.3,194.5L717.9,195.4L716.2,195.8L718.8,198.4L722.5,197.5L723.0,201.5L724.0,206.7L726.3,212.3L728.9,218.1L731.0,220.5L732.2,219.1L735.0,216.7L735.9,212.0L735.7,207.6L739.4,205.7L743.2,201.9L747.4,198.5L749.6,196.8L751.0,196.3L750.5,192.3L749.3,190.2L749.6,188.6L752.4,188.8L756.3,187.9L752.8,190.7L757.1,191.1L756.3,193.7L757.1,194.5L758.5,193.0L760.6,190.2L762.4,187.6L765.0,185.8L763.2,183.4L757.1,186.2L755.4,186.2L752.4,187.9L750.7,187.0L749.6,186.0L749.6,188.6L742.3,186.7L735.5,184.4L738.0,181.6L733.6,179.7L732.7,178.0L735.4,172.8L731.5,172.8L730.1,172.4L724.9,174.5L726.6,178.0L725.8,180.6L721.4,183.2L717.9,185.8L718.8,189.8ZM735.5,184.4L738.0,181.6L745.8,185.8L749.6,186.0L749.6,188.6L742.3,186.7ZM750.7,187.0L752.4,187.9L755.4,186.2L752.8,185.5ZM749.6,196.8L751.0,196.3L753.7,196.3L756.8,198.5L757.1,194.5L756.3,193.7L757.1,191.1L752.8,190.7L749.6,188.6L749.3,190.2L750.5,192.3ZM735.0,224.1L735.2,219.8L735.9,217.5L738.7,221.5L738.0,223.8L736.2,224.3ZM756.8,198.5L758.0,200.6L760.3,203.2L760.6,206.7L762.4,207.1L766.0,205.9L766.4,208.8L767.8,212.8L767.8,217.2L768.8,213.7L767.6,211.1L767.1,208.5L767.8,206.2L766.4,203.9L766.7,202.4L768.5,200.1L770.2,199.4L771.9,197.1L769.3,196.1L767.9,192.8L766.7,189.3L767.9,186.7L765.8,185.3L765.0,185.8L762.4,187.6L760.6,190.2L758.5,193.0L757.1,194.5ZM770.2,199.4L772.3,200.6L772.8,203.6L777.2,203.6L779.8,206.7L779.3,209.7L774.6,210.2L774.6,213.7L771.8,212.7L770.2,211.1L768.8,216.7L770.7,219.8L771.9,222.8L770.4,223.3L767.2,220.7L767.8,217.2L768.8,213.7L767.6,211.1L767.1,208.5L767.8,206.2L766.4,203.9L766.7,202.4L768.5,200.1ZM771.9,197.1L774.0,195.6L775.4,197.1L778.0,198.9L778.0,201.9L781.5,205.9L783.3,208.1L780.7,210.4L779.3,209.7L779.8,206.7L777.2,203.6L772.8,203.6L772.3,200.6L770.2,199.4ZM774.0,195.6L776.3,195.1L780.7,194.7L784.1,197.1L781.5,199.8L780.3,201.5L782.4,205.0L785.5,207.6L786.4,212.0L785.9,214.6L782.4,216.3L778.9,219.6L778.6,216.7L780.7,215.4L783.3,213.2L783.3,208.1L781.5,205.9L778.0,201.9L778.0,198.9L775.4,197.1ZM774.6,210.2L779.3,209.7L780.7,210.4L783.3,209.3L783.3,213.2L780.7,215.4L778.6,216.7L776.3,216.1L774.6,213.7ZM770.4,223.5L771.9,222.8L773.9,223.8L776.1,226.8L776.3,229.7L777.5,232.2L776.1,232.3L772.5,229.7L770.7,226.8L770.9,225.0ZM786.9,231.3L785.9,232.0L786.9,231.1L789.4,231.8L792.8,229.0L796.3,226.1L798.9,223.3L801.0,223.6L803.8,225.4L801.6,227.1L799.8,227.3L797.2,229.4L793.7,232.0L789.4,232.5ZM785.9,232.0L786.9,231.3L789.4,232.5L793.7,232.0L797.2,229.4L799.8,227.3L801.6,227.1L801.2,232.0L803.1,233.2L800.7,234.6L799.8,236.3L798.9,239.0L798.1,241.4L795.5,240.7L790.2,239.8L788.0,239.7L787.6,237.2L785.9,235.1ZM762.0,224.8L765.8,225.5L770.2,230.2L776.8,233.7L778.0,237.2L780.7,240.2L780.3,244.7L778.0,244.9L774.6,241.6L771.1,236.3L767.6,231.5L763.2,228.0ZM779.3,246.4L781.5,245.1L785.0,246.1L789.4,245.9L792.5,246.6L795.5,248.2L795.5,249.8L789.4,248.9L784.1,248.2L779.8,246.8ZM802.9,239.8L804.2,244.2L805.7,244.4L805.7,239.5L806.8,239.1L808.5,242.6L810.6,242.8L808.9,239.8L807.7,237.2L810.8,236.3L807.7,235.8L805.6,234.1L805.9,232.3L808.5,232.9L812.9,232.0L814.1,232.0L812.0,233.9L807.7,233.7L805.0,233.7L804.7,235.5ZM824.2,237.2L824.0,236.0L829.4,236.2L831.2,240.3L835.5,237.2L841.6,239.1L841.6,250.5L838.1,248.7L836.4,247.7L836.0,243.3L831.2,242.3L827.7,241.6L825.9,239.5ZM841.6,239.1L847.7,241.2L850.3,244.2L853.5,245.6L853.8,248.5L857.3,252.5L853.8,252.4L850.3,249.4L846.8,248.2L845.8,250.3L841.6,250.5ZM857.3,244.2L860.8,241.9L859.9,245.1L855.6,245.4ZM861.7,240.7L858.2,239.1L862.5,242.4ZM812.0,252.0L814.1,249.2L817.8,249.2L812.7,252.4ZM796.3,248.7L798.1,249.6L796.7,249.9ZM798.2,249.1L799.8,248.9L803.3,249.2L802.4,250.1L798.9,250.3ZM804.7,249.4L810.3,248.9L809.4,249.9L805.0,250.1ZM803.3,251.0L806.4,251.8L805.0,252.4ZM818.1,232.0L819.8,232.9L819.0,235.5L818.1,234.6ZM818.6,240.2L823.3,239.8L823.9,241.2L819.8,241.2ZM815.5,240.2L817.6,240.3L816.4,241.2ZM805.0,206.7L806.1,202.4L808.9,202.4L808.5,205.0L807.8,207.1L808.5,210.2L812.0,212.0L810.3,211.1L806.8,210.6L806.1,209.3ZM808.5,222.4L811.1,219.8L814.6,217.5L816.4,221.5L814.6,224.1L812.0,223.3ZM808.5,214.0L810.3,215.8L809.9,218.1L808.5,216.3ZM812.0,214.6L815.1,212.8L814.6,217.2L812.5,216.7ZM800.2,219.8L804.2,216.3L803.3,215.8L799.8,220.1ZM805.9,211.4L807.7,212.0L806.8,213.3ZM805.2,194.5L806.8,190.7L808.5,191.1L806.4,196.3ZM785.2,201.2L787.6,199.6L789.4,200.5L786.9,202.9ZM812.5,164.9L807.7,163.4L804.2,165.3L801.2,166.7L803.1,169.4L806.3,170.1L809.4,169.8L805.0,173.6L806.6,177.8L808.3,180.6L807.7,185.0L804.3,190.2L799.8,193.7L794.9,195.8L789.4,197.3L788.0,199.1L784.1,197.1L780.7,194.7L776.3,195.1L774.0,195.6L771.9,197.1L769.3,196.1L767.9,192.8L766.7,189.3L767.9,186.7L765.8,185.3L765.0,185.8L763.2,183.4L757.1,186.2L755.4,186.2L752.8,185.5L750.7,187.0L749.6,186.0L745.8,185.8L738.0,181.6L733.6,179.7L732.7,178.0L735.4,172.8L731.5,172.8L730.1,172.4L726.6,170.1L726.5,169.8L726.6,167.5L724.4,166.0L728.4,164.2L732.7,162.3L735.7,161.1L735.9,156.2L739.7,155.3L740.6,152.4L744.9,152.7L747.6,148.9L749.3,150.1L753.7,154.5L754.5,156.2L758.0,156.2L763.2,160.2L770.2,160.4L778.9,162.1L787.6,160.4L790.2,158.5L795.5,156.6L798.9,153.8L801.6,153.2L804.5,153.2L800.7,151.7L798.1,151.3L801.2,148.4L805.0,143.1L806.8,141.8L813.8,141.9L818.1,147.8L823.3,149.4L827.7,150.6L830.6,150.5L828.6,155.7L824.2,156.4L823.5,160.7L820.7,160.9L819.0,161.4L815.5,163.2ZM747.6,148.9L752.8,146.6L756.3,146.3L761.5,147.7L766.7,144.0L773.7,145.8L780.7,147.0L784.1,148.7L789.4,148.4L794.6,147.2L798.9,147.8L801.2,148.4L798.1,151.3L800.7,151.7L804.5,153.2L801.6,153.2L798.9,153.8L795.5,156.6L790.2,158.5L787.6,160.4L778.9,162.1L770.2,160.4L763.2,160.2L758.0,156.2L754.5,156.2L753.7,154.5L749.3,150.1ZM816.4,168.9L819.8,167.4L821.6,171.9L821.2,173.3L818.1,174.3L816.0,174.5L816.9,171.9L815.8,170.1ZM824.0,175.4L826.8,172.8L832.0,172.4L834.3,169.6L837.3,169.3L839.9,164.9L839.9,162.5L842.5,162.8L843.4,165.8L841.6,168.1L841.3,171.0L840.4,173.3L838.1,174.2L834.7,174.3L832.0,176.2L831.2,174.3L825.9,175.7ZM839.9,162.3L839.5,160.6L842.8,155.3L845.1,157.1L849.5,159.0L845.6,161.4L841.6,161.8ZM821.9,176.6L824.2,175.5L825.9,177.5L824.2,180.2L822.8,179.9ZM825.9,177.1L828.6,174.8L830.6,175.0L829.8,176.6L827.7,177.5ZM681.4,153.8L677.9,151.0L677.0,150.1L678.7,147.0L684.0,144.9L690.1,145.4L695.3,145.8L702.3,146.1L703.1,144.0L700.5,143.1L702.3,140.5L709.2,139.5L716.2,138.1L724.0,140.5L729.3,140.2L729.8,144.9L735.4,145.8L741.5,145.8L747.6,148.9L744.9,152.7L740.6,152.4L739.7,155.3L735.9,156.2L735.7,161.1L733.6,160.0L726.6,160.0L719.7,160.9L716.2,163.2L711.8,161.4L711.0,159.7L704.0,158.8L697.9,155.3L693.6,156.2L693.6,162.7L690.9,162.8L687.5,161.8L685.4,159.3L683.6,157.1L684.8,155.9L688.3,155.7L688.7,153.1L685.7,152.7ZM693.6,156.2L697.9,155.3L704.0,158.8L711.0,159.7L711.8,161.4L716.2,163.2L719.7,160.9L719.7,162.3L723.2,163.5L718.8,164.6L716.2,164.0L715.0,167.5L714.1,169.8L711.8,169.4L707.5,166.7L704.0,164.0L700.5,161.4L697.0,160.2L693.6,162.7ZM687.5,161.8L690.9,162.8L693.6,162.7L697.0,160.2L700.5,161.4L704.0,164.0L707.5,166.7L711.8,169.4L708.4,170.1L702.4,170.8L698.8,169.4L692.7,168.4L690.1,169.6L689.9,166.7L688.3,164.9L688.0,163.2ZM719.7,160.9L726.6,160.0L733.6,160.0L735.7,161.1L732.7,162.3L728.4,164.2L724.4,166.0L717.1,165.6L718.8,164.6L723.2,163.5L719.7,162.3ZM717.1,165.6L724.4,166.0L726.6,167.5L726.5,169.8L720.6,168.6L717.9,169.3L714.1,169.8L715.0,167.5L716.2,164.0L718.8,164.6ZM585.7,172.2L588.2,173.3L592.5,173.5L593.0,175.4L593.2,178.0L589.0,179.7L587.3,182.3L580.8,184.6L580.8,186.3L573.4,186.3L576.0,185.8L578.9,183.2L579.3,178.9L582.1,175.9L584.7,174.5ZM580.8,186.3L580.8,189.3L575.1,189.3L575.1,193.7L573.4,194.5L573.4,197.5L566.4,198.0L568.1,193.7L569.9,191.9L573.4,188.4L573.4,186.3ZM592.5,173.5L597.7,171.0L601.2,170.5L611.0,170.3L610.5,174.3L612.5,182.0L613.2,188.4L616.7,193.7L606.5,200.6L603.3,201.2L598.1,198.4L587.6,191.1L580.8,187.0L580.8,184.6L587.3,182.3L589.0,179.7L593.2,178.0L593.0,175.4ZM611.0,170.3L613.8,169.6L615.3,170.3L614.3,172.8L613.8,175.0L616.0,176.8L613.4,179.7L612.5,182.0L610.5,174.3ZM616.0,176.8L622.1,178.2L623.0,180.2L627.4,181.3L630.8,180.6L630.8,178.7L633.5,177.3L636.1,178.0L639.5,179.6L639.5,196.3L637.8,199.8L637.8,200.6L623.9,193.8L620.7,195.2L616.7,193.7L613.2,188.4L612.5,182.0L613.4,179.7ZM639.5,179.6L646.5,180.8L650.0,179.6L652.3,180.1L655.6,180.1L656.8,183.2L655.8,186.2L652.8,182.5L654.4,187.6L657.8,192.8L660.3,196.3L639.5,196.3ZM637.8,199.8L639.5,196.3L660.3,196.3L660.8,198.0L661.3,202.4L663.2,203.2L660.5,205.0L659.6,209.7L657.3,214.6L655.2,218.1L653.5,216.3L649.1,217.5L643.0,218.1L637.8,219.4L636.9,215.8L634.3,212.8L635.2,210.2L637.8,207.6L637.8,200.6ZM637.8,219.4L643.0,218.1L649.1,217.5L653.5,216.3L655.2,218.1L653.5,220.7L657.0,225.9L658.5,226.6L655.2,227.3L649.7,228.5L643.9,225.9L639.5,225.9L638.7,220.7ZM637.8,200.6L623.9,193.8L620.7,195.2L623.0,198.9L623.0,203.2L619.5,210.2L619.5,212.0L620.4,212.8L622.1,217.2L620.4,218.1L623.0,221.5L628.2,220.7L633.5,217.5L636.9,215.8L634.3,212.8L635.2,210.2L637.8,207.6ZM616.7,193.7L620.7,195.2L623.0,198.9L623.0,203.2L619.5,210.2L617.8,211.8L611.7,212.3L603.0,211.1L602.3,214.2L599.5,212.8L597.7,211.4L596.3,208.6L602.3,207.6L603.3,201.2L606.5,200.6ZM587.6,191.1L598.1,198.4L603.3,201.2L602.3,207.6L596.3,208.6L595.1,208.5L590.8,210.9L586.8,214.0L586.4,216.5L582.1,216.8L581.2,214.7L576.1,213.0L575.1,209.0L576.0,207.6L586.4,206.0ZM580.8,187.0L587.6,191.1L586.4,206.0L576.0,207.6L574.6,208.8L567.3,206.4L567.6,201.5L566.4,198.0L573.4,197.5L573.4,194.5L575.1,193.7L575.1,189.3L580.8,189.3ZM567.3,206.4L574.6,208.8L576.0,207.6L575.1,209.0L576.1,213.0L572.1,212.8L566.9,213.0L565.5,209.0ZM566.9,213.0L572.1,212.8L576.1,213.0L581.2,214.7L582.1,216.8L582.2,219.8L579.5,221.5L577.7,220.0L573.4,220.1L570.7,216.3ZM573.4,220.1L577.7,220.0L579.5,221.5L582.2,219.8L582.9,226.9L576.8,222.8ZM582.2,219.8L582.1,216.8L586.4,216.5L591.1,218.1L591.1,225.9L589.0,225.5L582.9,226.9ZM586.4,216.5L586.8,214.0L590.8,210.9L595.1,208.5L596.3,208.6L597.7,211.4L599.5,212.8L597.6,215.4L591.1,215.4L591.1,218.1ZM591.1,215.4L597.6,215.4L596.9,219.8L597.7,224.3L592.5,226.2L591.1,225.9L591.1,218.1ZM597.6,215.4L599.5,212.8L602.3,214.2L600.7,218.9L600.7,223.6L597.7,224.3L596.9,219.8ZM600.7,223.6L600.7,218.9L602.3,214.2L603.0,211.1L611.7,212.3L617.8,211.8L619.5,212.0L620.4,212.8L618.6,218.1L616.6,222.4L612.5,223.3L610.8,226.6L606.5,227.1L603.8,223.6ZM610.8,226.6L612.5,223.3L616.6,222.4L618.6,218.1L620.4,212.8L622.1,217.2L620.4,218.1L623.0,221.5L621.3,226.8L623.9,230.8L618.6,230.8L613.1,230.6L612.5,227.6ZM621.3,226.8L623.0,221.5L628.2,220.7L633.5,217.5L636.9,215.8L637.8,219.4L638.7,220.7L639.5,225.9L635.2,227.1L629.1,227.6L626.5,228.5L623.9,230.8ZM613.1,230.6L618.6,230.8L623.9,230.8L626.5,228.5L627.4,232.9L624.7,238.1L623.5,241.6L617.3,245.1L616.6,242.4L612.2,238.1L612.7,233.7ZM617.3,245.1L623.5,241.6L624.7,238.1L627.4,232.9L626.5,228.5L629.1,227.6L635.2,227.1L639.5,225.9L643.9,225.9L649.7,228.5L647.9,232.9L647.4,237.2L646.9,242.4L648.3,248.5L645.6,249.4L645.6,253.8L647.4,256.4L643.9,255.5L637.8,253.8L634.3,253.8L634.0,247.7L630.0,246.8L626.5,248.5L624.7,245.1L618.6,245.1ZM649.7,228.5L655.2,227.3L657.0,232.0L655.2,236.3L648.3,236.3L647.9,232.9ZM655.2,227.3L658.5,226.6L662.2,228.3L667.4,227.6L667.4,237.7L665.3,241.6L661.3,239.8L655.2,236.3L657.0,232.0ZM647.4,237.2L648.3,236.3L649.7,238.6L648.8,242.1L646.9,242.4ZM648.3,236.3L655.2,236.3L661.3,239.8L665.3,241.6L664.5,246.4L664.8,252.0L666.6,253.8L662.2,254.3L657.0,254.6L656.1,251.1L652.6,250.8L649.1,248.9L648.3,248.5L646.9,242.4L648.8,242.1L649.7,238.6ZM659.6,209.7L660.5,205.0L663.2,203.2L665.2,207.6L667.8,209.3L669.9,212.8L670.6,215.4L671.4,213.9L672.6,218.9L679.4,220.7L674.4,225.9L668.8,227.6L667.4,227.6L662.2,228.3L658.5,226.6L657.0,225.9L653.5,220.7L655.2,218.1L657.3,214.6ZM659.6,209.7L660.5,205.0L663.2,203.2L665.2,207.6L667.8,209.3L671.1,212.5L669.9,212.8L665.7,209.3L662.2,209.3ZM670.6,215.4L671.4,213.9L673.5,216.5L677.9,215.3L685.4,214.0L684.8,216.5L683.1,221.5L679.6,226.8L676.1,231.1L670.9,235.5L668.3,237.7L667.4,237.7L667.4,227.6L668.8,227.6L674.4,225.9L679.4,220.7L672.6,218.9ZM617.3,245.1L618.6,245.1L624.7,245.1L626.5,248.5L630.0,246.8L634.0,247.7L634.3,253.8L637.8,253.8L637.8,257.2L634.3,257.2L634.3,262.5L636.9,265.1L630.8,265.1L619.5,264.7L616.6,264.2L617.8,258.1L619.5,254.6L618.6,249.4ZM634.3,257.2L637.8,257.2L637.8,253.8L643.9,255.5L647.4,256.4L645.6,253.8L645.6,249.4L649.1,248.9L652.6,250.8L653.8,253.8L653.5,259.0L648.3,261.6L644.8,263.3L640.4,265.6L636.9,265.1L634.3,262.5ZM652.6,250.8L656.1,251.1L657.0,254.6L657.8,259.9L657.3,264.2L655.2,260.7L653.5,259.0L653.8,253.8ZM657.0,254.6L662.2,254.3L666.6,253.8L666.9,260.7L660.5,265.1L657.0,269.4L657.8,272.9L657.8,276.4L653.3,279.7L651.7,281.3L650.9,276.4L652.6,272.9L653.5,266.0L653.1,263.3L649.1,262.5L648.3,261.6L653.5,259.0L655.2,260.7L657.3,264.2L657.8,259.9ZM640.4,265.6L644.8,263.3L648.3,261.6L649.1,262.5L653.1,263.3L653.5,266.0L652.6,272.9L650.9,273.4L646.5,273.3L643.9,270.3L641.3,268.6ZM616.6,264.2L619.5,264.7L630.8,265.1L636.9,265.1L640.4,265.6L636.1,266.3L632.6,266.5L632.6,272.9L630.8,272.9L630.8,284.1L625.6,284.4L622.7,281.6L621.3,274.7L619.5,269.4ZM632.6,266.5L636.1,266.3L640.4,265.6L641.3,268.6L643.9,270.3L646.5,273.3L643.0,276.1L641.3,277.6L639.5,279.5L636.1,278.7L630.8,277.8L630.8,272.9L632.6,272.9ZM625.6,284.4L630.8,284.1L630.8,277.8L636.1,278.7L639.5,279.5L641.3,277.6L643.0,276.1L646.5,273.3L650.9,273.4L651.7,281.3L653.1,283.4L650.0,286.9L644.8,292.1L640.8,293.8L635.2,293.8L630.8,295.2L628.1,294.2L627.4,291.2ZM681.9,255.5L684.0,261.6L682.2,266.0L678.7,277.3L674.4,279.0L671.8,272.9L672.6,266.8L676.1,262.5L679.6,258.1ZM643.0,286.2L645.1,284.4L647.2,285.6L646.5,287.4L644.4,287.9ZM650.0,279.9L651.7,279.9L651.7,282.0L650.4,282.2ZM794.1,272.9L794.9,279.9L793.7,279.0L796.3,286.0L797.5,290.3L796.3,294.4L801.6,295.6L806.8,293.5L812.0,292.1L815.5,290.9L820.7,289.6L825.1,289.5L829.4,291.7L832.0,295.2L835.5,292.1L836.4,296.4L839.9,299.9L845.1,302.2L850.9,302.7L857.3,299.9L859.4,293.8L862.5,288.6L863.6,284.2L862.5,279.0L858.7,273.8L854.7,269.4L850.3,266.0L849.1,260.7L846.0,259.0L844.2,253.2L842.5,257.2L842.5,260.7L841.3,265.1L838.1,264.2L834.7,262.1L832.0,260.4L834.3,255.9L831.2,255.5L826.8,254.3L824.2,256.0L821.6,260.6L818.1,259.0L815.5,259.3L812.0,263.0L808.9,266.0L803.3,269.4L798.9,270.7ZM847.9,305.5L854.3,305.8L853.8,309.9L851.7,310.6L848.9,308.1ZM896.8,294.5L900.0,298.2L902.2,299.1L906.9,300.3L904.3,303.4L902.6,306.5L900.5,306.5L898.8,302.9L900.2,299.1ZM896.8,305.2L899.6,307.2L897.4,310.4L893.9,313.0L890.4,315.8L886.0,314.7L889.5,311.2L894.8,307.4ZM881.7,269.8L886.9,273.4L883.4,272.1ZM904.9,265.1L906.9,265.6L906.1,266.5ZM868.6,246.1L873.8,248.9L870.4,248.2ZM873.8,250.3L876.5,251.7L874.7,252.0ZM886.0,260.7L887.8,263.3L886.6,262.1Z"/><path fill="none" stroke-width="2.6" d="M388.7,110.0L390.4,111.8L392.5,112.0L393.9,113.4L395.8,113.7L397.5,114.5L399.2,115.3L400.9,115.2L402.7,116.3L404.4,115.0L406.1,113.9L407.9,115.1L409.9,114.2L411.9,114.7L414.0,114.9L415.6,114.6L417.2,114.2L418.7,113.5L417.4,110.9L415.8,109.9L414.4,108.8L413.1,107.4L411.0,106.8L408.7,106.6L406.3,106.1L404.4,107.8L402.7,106.8L400.8,108.5L399.2,107.4L396.9,108.2L394.8,107.1L393.1,107.5L391.6,109.0L389.6,108.3ZM377.4,109.4L378.8,108.1L380.0,106.6L381.8,106.1L383.3,105.0L385.2,105.0L387.4,104.0L389.4,104.1L391.3,105.7L393.0,106.6L394.8,106.9L393.0,106.5L391.9,108.2L390.5,109.2L388.7,108.8L386.1,110.4L383.9,110.6L381.7,110.9L379.5,110.2ZM481.0,126.8L482.2,125.3L483.6,124.0L482.0,122.6L481.9,120.5L483.6,119.9L485.7,120.2L487.1,118.8L485.9,116.8L483.6,117.0L481.8,115.4L479.3,115.3L477.4,114.5L476.7,112.7L475.1,111.6L473.0,112.3L471.4,111.3L470.1,109.6L467.9,110.2L466.2,109.5L464.2,110.0L463.1,107.3L461.0,108.1L459.6,106.6L457.5,106.9L455.8,106.4L454.2,107.0L452.7,107.6L451.1,107.6L449.5,106.5L447.9,106.6L446.4,106.9L444.8,106.7L443.3,107.7L441.6,106.8L440.1,107.4L441.8,108.6L443.1,110.3L445.3,110.6L447.1,112.7L449.2,111.7L451.1,113.6L453.2,113.2L454.7,114.3L456.9,112.9L458.4,114.4L460.7,114.2L461.9,116.1L464.0,115.1L466.2,116.1L467.7,116.8L468.8,117.9L468.0,120.0L465.6,119.7L463.6,121.0L461.0,122.6L463.2,122.2L465.4,122.6L467.4,122.2L468.7,124.0L470.6,124.3L472.9,123.9L474.9,125.2L476.5,126.2L478.4,126.2ZM439.2,101.3L441.0,101.1L442.7,101.0L444.4,102.3L446.2,101.0L447.9,102.4L449.7,100.4L451.4,101.7L453.0,100.3L454.6,102.6L456.1,101.9L457.7,100.3L459.3,101.5L460.3,100.3L462.5,100.5L463.5,99.2L464.5,97.9L466.4,96.5L468.6,97.9L470.6,97.0L472.5,96.1L474.1,94.7L475.8,95.2L477.3,94.2L478.6,92.6L480.5,93.6L482.1,93.1L483.6,92.6L485.2,91.5L487.0,91.3L488.9,91.2L487.4,90.0L485.9,89.7L484.1,91.0L482.7,89.3L481.0,90.2L479.3,90.9L477.5,91.4L475.8,91.4L474.1,90.0L472.3,89.0L470.5,91.2L468.8,89.6L467.1,89.8L465.3,89.0L463.6,89.4L461.9,90.3L460.1,89.1L458.3,89.0L456.6,90.1L454.9,91.6L453.2,90.4L451.3,89.3L449.7,90.7L448.0,91.5L446.3,92.3L444.5,92.2L442.7,91.4L441.0,92.2L439.2,91.8L437.1,92.9L434.9,93.5L432.5,93.2L430.5,94.4L428.2,94.1L427.0,96.1L428.3,97.6L429.9,97.5L431.2,98.6L433.1,97.9L435.3,98.6L437.5,99.6ZM434.9,104.5L436.4,105.9L438.0,105.4L439.5,105.5L441.1,104.8L442.7,104.8L444.5,105.6L446.2,105.0L447.9,104.7L449.7,103.5L451.4,105.4L453.1,103.5L454.9,104.6L456.6,102.7L455.1,101.2L453.4,100.9L451.3,102.5L449.7,101.5L447.9,100.2L446.2,101.0L444.5,102.2L442.7,100.5L441.0,101.7L439.2,102.0L437.5,102.6L435.7,102.2ZM393.1,103.9L394.6,104.2L396.1,104.7L397.6,105.5L399.4,103.6L400.9,104.8L402.7,105.1L404.5,105.8L406.1,104.0L407.9,105.0L409.7,105.3L411.3,103.9L413.1,102.6L411.6,101.3L410.0,100.2L407.9,101.0L406.1,100.3L404.4,100.9L402.6,100.5L400.8,100.7L399.2,101.7L397.1,102.2L395.1,100.9L393.1,101.9ZM417.4,108.3L419.3,107.4L420.4,109.8L421.9,110.4L423.6,110.1L425.3,110.0L426.9,109.7L427.9,108.3L425.9,107.9L425.3,106.0L423.5,107.7L421.1,106.3L419.2,107.1ZM429.6,108.3L431.6,109.9L434.0,109.2L436.6,109.5L438.3,107.4L436.6,105.7L434.9,105.8L433.1,104.7L431.4,105.7L430.3,106.8ZM444.4,123.1L446.1,123.5L447.5,124.2L448.8,125.2L450.6,125.7L451.5,123.1L453.5,124.3L454.9,123.5L453.3,122.5L452.4,120.7L450.5,120.0L448.7,119.1L447.2,121.5L445.3,120.5ZM419.2,102.2L420.9,102.5L422.5,103.9L424.3,104.0L426.2,103.6L427.0,101.3L425.3,100.8L423.7,99.8L421.8,100.8ZM382.6,101.7L384.3,102.2L386.2,100.9L387.7,103.7L389.6,102.6L390.9,101.3L392.9,102.8L394.4,102.1L395.7,100.8L393.5,101.1L392.2,99.4L390.6,99.7L389.1,100.2L387.5,100.2L385.9,100.4L384.3,100.5ZM424.4,98.7L426.2,98.5L427.9,99.5L429.6,100.0L431.4,99.6L433.3,97.9L435.7,98.4L433.9,97.0L431.5,98.8L429.6,97.3L427.7,97.1L426.5,99.5ZM412.2,98.7L414.3,98.4L416.3,98.1L418.3,99.1L420.1,97.7L418.1,98.8L416.6,97.2L414.8,97.0L413.8,98.2ZM455.8,126.6L457.5,127.1L458.4,125.9L456.6,125.7ZM404.4,98.7L405.7,99.4L407.2,99.0L408.6,99.1L409.9,99.9L411.3,99.6L412.4,98.4L414.0,98.2L412.5,98.5L411.2,97.8L409.8,98.1L408.4,97.8L407.0,97.7L405.8,98.6ZM427.0,100.5L428.9,99.9L430.4,101.5L432.3,101.2L433.9,101.4L434.9,100.1L433.1,99.8L431.4,100.0L429.6,99.6ZM442.7,99.6L444.2,99.1L445.7,99.4L447.0,100.5L448.5,100.4L449.9,100.7L451.4,100.5L453.2,99.1L451.8,98.3L450.3,99.2L448.9,99.4L447.5,99.2L446.2,98.4L444.5,99.1ZM385.2,98.7L386.6,98.7L388.0,99.6L389.4,98.5L390.8,98.8L392.2,99.1L393.9,98.0L392.6,97.1L391.2,97.3L389.8,97.6L388.3,98.2L387.0,97.7ZM413.1,102.2L414.8,102.4L416.5,103.0L418.3,102.9L420.1,101.9L418.5,102.4L417.1,101.8L415.7,101.2L414.4,101.7ZM425.3,104.3L426.7,104.4L428.2,105.0L429.6,104.8L431.0,104.2L432.3,103.6L430.5,103.8L428.7,103.9L427.0,103.1ZM456.6,107.4L458.1,107.3L459.4,108.0L460.8,108.5L462.2,108.3L463.6,108.1L465.6,108.3L467.1,107.1L465.8,106.3L464.3,106.8L463.0,106.2L461.5,106.6L460.1,106.6L458.3,106.7ZM470.6,110.9L472.3,111.2L474.1,110.9L475.8,111.3L477.5,110.2L475.8,110.0L474.0,110.7L472.3,109.7ZM402.6,110.9L404.0,111.2L405.4,111.5L406.8,111.1L408.2,112.1L409.6,111.4L411.3,110.4L409.9,110.9L408.5,111.0L407.1,110.6L405.8,109.8L404.4,109.9ZM374.8,111.8L376.2,112.7L377.7,111.3L379.1,112.1L380.0,111.1L378.6,110.8L377.0,111.7L375.6,110.7ZM465.4,115.3L466.9,114.7L468.2,115.8L469.7,115.6L470.6,114.6L469.1,114.3L467.7,114.4L466.2,114.2ZM449.7,103.9L451.4,103.9L453.2,104.3L454.9,103.6L453.5,102.9L452.0,103.1L450.5,103.3ZM491.5,94.4L493.3,94.2L495.0,94.7L495.8,93.8L494.0,94.4L492.4,93.5ZM520.2,130.4L518.5,129.8L516.7,129.2L514.4,129.4L512.4,128.3L510.3,127.8L509.4,125.7L508.4,123.8L506.3,123.1L504.5,120.5L502.3,118.8L502.8,116.1L505.0,115.6L507.2,114.8L506.8,112.7L504.9,112.3L502.7,113.3L501.1,111.4L500.2,109.5L499.3,107.4L497.6,105.7L495.8,104.4L494.1,103.1L492.1,101.8L489.7,102.2L488.1,100.6L486.3,101.1L484.6,101.0L482.8,102.2L481.0,101.9L479.0,101.9L477.2,101.0L475.2,100.8L473.2,100.8L471.1,100.7L469.7,99.1L468.8,97.9L470.4,96.9L472.4,97.4L474.3,97.6L475.8,96.1L477.9,97.0L479.2,94.7L481.0,94.6L482.8,94.4L484.6,94.4L486.2,93.6L487.7,91.8L489.7,92.7L491.5,92.6L493.1,91.8L495.2,93.6L496.8,92.5L498.2,90.2L500.2,91.2L501.9,90.9L503.7,92.3L505.4,91.7L507.2,89.9L508.9,92.6L510.6,92.4L512.4,90.2L514.1,91.4L516.0,91.9L517.7,91.2L519.3,90.6L521.2,91.4L522.7,88.9L524.6,90.2L526.3,89.7L528.1,90.7L529.7,88.0L531.6,90.8L533.3,90.0L535.0,88.8L536.7,88.5L538.4,87.6L540.3,89.0L542.0,89.5L543.7,89.1L545.6,87.8L547.2,90.1L549.0,89.2L550.6,91.1L552.5,89.7L554.1,90.2L555.8,91.3L557.8,89.2L559.3,91.7L561.2,90.9L563.1,90.5L564.8,92.1L566.7,92.2L568.7,91.5L570.4,92.4L572.3,92.4L574.2,92.5L572.0,92.5L570.7,94.4L569.0,94.8L567.6,96.5L565.3,94.9L563.8,96.1L562.0,98.7L563.8,100.5L562.9,102.9L560.3,103.1L561.2,105.2L559.2,106.6L556.8,107.1L557.7,109.2L555.6,109.8L555.1,111.8L553.2,112.2L552.1,113.8L550.7,114.9L548.5,114.2L546.9,117.0L544.6,115.8L542.5,116.8L540.3,116.1L538.5,118.1L535.9,118.8L534.0,120.3L531.5,120.2L529.2,120.0L527.2,121.4L525.1,123.1L523.7,125.7L522.0,128.3Z"/>
<path fill="#1c4f1c" d="M381.7,149.2L430.2,149.2L430.2,148.5L430.9,149.6L436.6,150.8L439.9,151.0L442.7,150.5L448.3,152.9L448.6,153.8L450.4,154.3L452.3,155.7L453.0,159.7L451.2,161.4L454.5,160.4L458.4,160.0L458.0,158.8L462.7,157.6L465.7,156.2L471.4,156.2L472.8,155.3L474.1,153.2L475.5,152.0L477.2,152.2L477.9,152.6L477.9,155.0L479.3,156.2L479.3,156.6L476.2,157.4L474.1,158.3L472.8,160.4L473.9,161.4L474.2,162.0L471.4,162.5L468.0,163.4L467.1,163.9L467.1,165.8L465.5,166.8L464.5,167.5L463.6,170.1L464.5,172.8L462.7,174.0L460.3,175.5L458.0,176.8L454.9,179.2L454.2,182.0L455.6,185.0L456.6,187.9L455.9,190.7L454.5,190.5L453.5,188.8L451.9,186.3L451.8,184.1L450.0,182.3L447.9,182.9L445.3,181.6L441.8,181.6L440.4,182.0L440.6,183.9L438.3,183.9L435.7,183.0L432.6,182.9L430.9,183.6L427.9,185.3L426.3,187.0L426.7,189.5L423.4,188.6L422.7,186.7L421.3,185.3L419.4,182.7L417.6,182.7L416.6,184.1L414.8,183.6L413.6,182.5L410.5,179.2L407.5,179.2L407.5,180.1L402.5,180.1L396.0,178.0L392.0,178.0L389.6,175.4L385.9,174.3L383.8,170.8L382.6,169.3L381.7,167.9L380.3,165.3L379.5,164.2L379.6,161.4L379.1,159.7L380.0,154.1L379.5,151.9L378.8,150.3L381.4,150.6L382.1,149.2Z"/>
<path fill="#1c4f1c" d="M350.4,113.4L350.4,129.6L353.9,130.1L356.5,131.5L360.0,130.4L363.4,132.7L367.8,136.2L369.5,137.2L366.4,138.4L364.3,138.1L362.2,135.3L360.0,134.4L358.2,133.4L356.0,132.5L352.5,130.8L347.8,130.1L345.2,130.1L340.8,129.2L338.2,130.1L333.8,131.3L331.6,131.5L332.4,128.9L329.5,131.5L327.4,133.4L323.7,135.0L319.9,137.0L314.1,138.8L309.3,139.7L312.1,137.9L316.4,137.0L321.1,134.3L321.6,132.5L318.2,132.2L313.8,132.5L313.8,130.3L308.9,129.6L307.7,128.0L306.8,126.9L307.7,125.7L309.4,124.5L315.5,124.0L315.9,122.8L314.7,122.2L308.6,122.1L306.0,121.9L303.2,120.3L306.5,119.3L310.3,118.6L311.2,119.5L314.1,119.1L310.7,117.5L306.0,115.6L309.4,114.6L312.1,113.2L317.3,111.8L322.9,110.4L326.9,111.1L331.2,111.3L335.6,111.8L339.9,112.1L345.2,112.5Z"/>
<path fill="#3b8a3b" d="M479.3,156.2L477.9,155.0L477.9,152.6L477.2,152.2L475.5,152.0L474.1,153.2L472.8,155.3L471.4,156.2L465.7,156.2L462.7,157.6L458.0,158.8L458.4,160.0L454.5,160.4L451.2,161.4L453.0,159.7L452.3,155.7L450.4,154.3L448.6,153.8L448.3,152.9L442.7,150.5L439.9,151.0L436.6,150.8L430.9,149.6L430.2,148.5L430.2,149.2L381.7,149.2L381.2,149.1L379.1,147.8L377.4,146.8L374.8,145.8L373.4,143.7L371.6,142.3L369.5,140.5L369.5,137.2L367.8,136.2L363.4,132.7L360.0,130.4L356.5,131.5L353.9,130.1L350.4,129.6L350.4,113.4L353.9,113.5L358.2,114.6L361.7,113.4L366.1,113.2L370.4,112.7L373.9,112.1L377.4,113.7L380.9,113.7L384.3,113.0L390.4,114.1L395.7,114.8L399.2,115.8L406.1,116.1L410.5,114.8L414.8,116.1L419.2,116.7L424.4,116.5L427.9,115.8L429.6,113.5L432.3,114.8L433.1,113.5L437.5,113.5L440.1,114.4L442.7,115.6L443.1,117.5L446.2,117.9L447.1,114.4L448.8,113.0L452.3,113.9L454.0,115.8L454.4,117.9L450.5,119.3L446.5,118.8L445.3,120.8L443.6,122.2L440.1,123.1L438.0,123.8L435.2,125.7L433.1,127.5L431.4,129.7L431.0,131.8L434.0,132.3L434.9,134.4L438.3,135.1L441.0,136.0L443.6,137.2L447.1,138.3L450.5,138.4L452.6,138.6L452.6,141.4L454.0,143.1L455.8,144.9L457.9,144.9L458.9,143.1L458.4,140.0L461.0,138.3L462.4,136.2L461.9,133.6L459.8,132.2L461.0,130.1L460.1,127.5L461.0,126.1L465.4,126.2L468.8,126.4L471.4,127.8L474.4,128.7L474.6,131.3L476.7,132.2L478.9,132.7L481.0,132.2L482.8,130.4L483.6,129.6L484.9,131.3L487.1,133.6L488.9,136.2L491.5,137.9L494.1,139.7L496.2,140.5L498.8,143.1L496.4,144.9L493.6,145.8L490.6,147.2L485.4,147.0L481.0,147.2L478.4,148.5L474.9,151.2L472.7,152.7L476.7,149.4L481.0,148.9L483.6,149.2L484.2,150.1L481.9,151.0L483.1,152.7L484.0,153.9L488.0,154.8L490.6,152.7L491.8,154.5L489.7,155.7L485.4,156.9L481.4,158.6L480.7,157.3L483.6,155.7L481.0,155.9Z"/>
<path fill="#3b8a3b" d="M372.3,146.1L378.2,147.2L381.2,150.3L378.6,149.9L374.4,147.5Z"/>
<path fill="#3b8a3b" d="M492.7,151.7L493.9,150.8L494.1,149.2L494.2,148.0L495.6,147.7L495.8,146.6L497.1,146.1L498.3,145.6L499.3,144.7L499.5,146.3L498.8,147.7L500.0,148.4L501.6,147.9L502.8,148.7L503.3,149.8L503.6,150.9L504.4,151.9L503.2,152.2L502.8,153.4L501.7,152.9L500.5,153.2L499.3,152.9L498.4,151.7L497.3,151.8L496.1,152.3L495.0,151.8L493.8,151.2Z"/>
<path fill="#3b8a3b" d="M388.7,110.0L390.4,111.8L392.5,112.0L393.9,113.4L395.8,113.7L397.5,114.5L399.2,115.3L400.9,115.2L402.7,116.3L404.4,115.0L406.1,113.9L407.9,115.1L409.9,114.2L411.9,114.7L414.0,114.9L415.6,114.6L417.2,114.2L418.7,113.5L417.4,110.9L415.8,109.9L414.4,108.8L413.1,107.4L411.0,106.8L408.7,106.6L406.3,106.1L404.4,107.8L402.7,106.8L400.8,108.5L399.2,107.4L396.9,108.2L394.8,107.1L393.1,107.5L391.6,109.0L389.6,108.3ZM377.4,109.4L378.8,108.1L380.0,106.6L381.8,106.1L383.3,105.0L385.2,105.0L387.4,104.0L389.4,104.1L391.3,105.7L393.0,106.6L394.8,106.9L393.0,106.5L391.9,108.2L390.5,109.2L388.7,108.8L386.1,110.4L383.9,110.6L381.7,110.9L379.5,110.2ZM481.0,126.8L482.2,125.3L483.6,124.0L482.0,122.6L481.9,120.5L483.6,119.9L485.7,120.2L487.1,118.8L485.9,116.8L483.6,117.0L481.8,115.4L479.3,115.3L477.4,114.5L476.7,112.7L475.1,111.6L473.0,112.3L471.4,111.3L470.1,109.6L467.9,110.2L466.2,109.5L464.2,110.0L463.1,107.3L461.0,108.1L459.6,106.6L457.5,106.9L455.8,106.4L454.2,107.0L452.7,107.6L451.1,107.6L449.5,106.5L447.9,106.6L446.4,106.9L444.8,106.7L443.3,107.7L441.6,106.8L440.1,107.4L441.8,108.6L443.1,110.3L445.3,110.6L447.1,112.7L449.2,111.7L451.1,113.6L453.2,113.2L454.7,114.3L456.9,112.9L458.4,114.4L460.7,114.2L461.9,116.1L464.0,115.1L466.2,116.1L467.7,116.8L468.8,117.9L468.0,120.0L465.6,119.7L463.6,121.0L461.0,122.6L463.2,122.2L465.4,122.6L467.4,122.2L468.7,124.0L470.6,124.3L472.9,123.9L474.9,125.2L476.5,126.2L478.4,126.2ZM439.2,101.3L441.0,101.1L442.7,101.0L444.4,102.3L446.2,101.0L447.9,102.4L449.7,100.4L451.4,101.7L453.0,100.3L454.6,102.6L456.1,101.9L457.7,100.3L459.3,101.5L460.3,100.3L462.5,100.5L463.5,99.2L464.5,97.9L466.4,96.5L468.6,97.9L470.6,97.0L472.5,96.1L474.1,94.7L475.8,95.2L477.3,94.2L478.6,92.6L480.5,93.6L482.1,93.1L483.6,92.6L485.2,91.5L487.0,91.3L488.9,91.2L487.4,90.0L485.9,89.7L484.1,91.0L482.7,89.3L481.0,90.2L479.3,90.9L477.5,91.4L475.8,91.4L474.1,90.0L472.3,89.0L470.5,91.2L468.8,89.6L467.1,89.8L465.3,89.0L463.6,89.4L461.9,90.3L460.1,89.1L458.3,89.0L456.6,90.1L454.9,91.6L453.2,90.4L451.3,89.3L449.7,90.7L448.0,91.5L446.3,92.3L444.5,92.2L442.7,91.4L441.0,92.2L439.2,91.8L437.1,92.9L434.9,93.5L432.5,93.2L430.5,94.4L428.2,94.1L427.0,96.1L428.3,97.6L429.9,97.5L431.2,98.6L433.1,97.9L435.3,98.6L437.5,99.6ZM434.9,104.5L436.4,105.9L438.0,105.4L439.5,105.5L441.1,104.8L442.7,104.8L444.5,105.6L446.2,105.0L447.9,104.7L449.7,103.5L451.4,105.4L453.1,103.5L454.9,104.6L456.6,102.7L455.1,101.2L453.4,100.9L451.3,102.5L449.7,101.5L447.9,100.2L446.2,101.0L444.5,102.2L442.7,100.5L441.0,101.7L439.2,102.0L437.5,102.6L435.7,102.2ZM393.1,103.9L394.6,104.2L396.1,104.7L397.6,105.5L399.4,103.6L400.9,104.8L402.7,105.1L404.5,105.8L406.1,104.0L407.9,105.0L409.7,105.3L411.3,103.9L413.1,102.6L411.6,101.3L410.0,100.2L407.9,101.0L406.1,100.3L404.4,100.9L402.6,100.5L400.8,100.7L399.2,101.7L397.1,102.2L395.1,100.9L393.1,101.9ZM417.4,108.3L419.3,107.4L420.4,109.8L421.9,110.4L423.6,110.1L425.3,110.0L426.9,109.7L427.9,108.3L425.9,107.9L425.3,106.0L423.5,107.7L421.1,106.3L419.2,107.1ZM429.6,108.3L431.6,109.9L434.0,109.2L436.6,109.5L438.3,107.4L436.6,105.7L434.9,105.8L433.1,104.7L431.4,105.7L430.3,106.8ZM444.4,123.1L446.1,123.5L447.5,124.2L448.8,125.2L450.6,125.7L451.5,123.1L453.5,124.3L454.9,123.5L453.3,122.5L452.4,120.7L450.5,120.0L448.7,119.1L447.2,121.5L445.3,120.5ZM419.2,102.2L420.9,102.5L422.5,103.9L424.3,104.0L426.2,103.6L427.0,101.3L425.3,100.8L423.7,99.8L421.8,100.8ZM382.6,101.7L384.3,102.2L386.2,100.9L387.7,103.7L389.6,102.6L390.9,101.3L392.9,102.8L394.4,102.1L395.7,100.8L393.5,101.1L392.2,99.4L390.6,99.7L389.1,100.2L387.5,100.2L385.9,100.4L384.3,100.5ZM424.4,98.7L426.2,98.5L427.9,99.5L429.6,100.0L431.4,99.6L433.3,97.9L435.7,98.4L433.9,97.0L431.5,98.8L429.6,97.3L427.7,97.1L426.5,99.5ZM412.2,98.7L414.3,98.4L416.3,98.1L418.3,99.1L420.1,97.7L418.1,98.8L416.6,97.2L414.8,97.0L413.8,98.2ZM455.8,126.6L457.5,127.1L458.4,125.9L456.6,125.7Z"/>
<path fill="#3b8a3b" d="M404.4,98.7L405.7,99.4L407.2,99.0L408.6,99.1L409.9,99.9L411.3,99.6L412.4,98.4L414.0,98.2L412.5,98.5L411.2,97.8L409.8,98.1L408.4,97.8L407.0,97.7L405.8,98.6ZM427.0,100.5L428.9,99.9L430.4,101.5L432.3,101.2L433.9,101.4L434.9,100.1L433.1,99.8L431.4,100.0L429.6,99.6ZM442.7,99.6L444.2,99.1L445.7,99.4L447.0,100.5L448.5,100.4L449.9,100.7L451.4,100.5L453.2,99.1L451.8,98.3L450.3,99.2L448.9,99.4L447.5,99.2L446.2,98.4L444.5,99.1ZM385.2,98.7L386.6,98.7L388.0,99.6L389.4,98.5L390.8,98.8L392.2,99.1L393.9,98.0L392.6,97.1L391.2,97.3L389.8,97.6L388.3,98.2L387.0,97.7ZM413.1,102.2L414.8,102.4L416.5,103.0L418.3,102.9L420.1,101.9L418.5,102.4L417.1,101.8L415.7,101.2L414.4,101.7ZM425.3,104.3L426.7,104.4L428.2,105.0L429.6,104.8L431.0,104.2L432.3,103.6L430.5,103.8L428.7,103.9L427.0,103.1ZM456.6,107.4L458.1,107.3L459.4,108.0L460.8,108.5L462.2,108.3L463.6,108.1L465.6,108.3L467.1,107.1L465.8,106.3L464.3,106.8L463.0,106.2L461.5,106.6L460.1,106.6L458.3,106.7ZM470.6,110.9L472.3,111.2L474.1,110.9L475.8,111.3L477.5,110.2L475.8,110.0L474.0,110.7L472.3,109.7ZM402.6,110.9L404.0,111.2L405.4,111.5L406.8,111.1L408.2,112.1L409.6,111.4L411.3,110.4L409.9,110.9L408.5,111.0L407.1,110.6L405.8,109.8L404.4,109.9ZM374.8,111.8L376.2,112.7L377.7,111.3L379.1,112.1L380.0,111.1L378.6,110.8L377.0,111.7L375.6,110.7ZM465.4,115.3L466.9,114.7L468.2,115.8L469.7,115.6L470.6,114.6L469.1,114.3L467.7,114.4L466.2,114.2ZM449.7,103.9L451.4,103.9L453.2,104.3L454.9,103.6L453.5,102.9L452.0,103.1L450.5,103.3ZM491.5,94.4L493.3,94.2L495.0,94.7L495.8,93.8L494.0,94.4L492.4,93.5Z"/>
<path fill="#e0f0dc" d="M520.2,130.4L518.5,129.8L516.7,129.2L514.4,129.4L512.4,128.3L510.3,127.8L509.4,125.7L508.4,123.8L506.3,123.1L504.5,120.5L502.3,118.8L502.8,116.1L505.0,115.6L507.2,114.8L506.8,112.7L504.9,112.3L502.7,113.3L501.1,111.4L500.2,109.5L499.3,107.4L497.6,105.7L495.8,104.4L494.1,103.1L492.1,101.8L489.7,102.2L488.1,100.6L486.3,101.1L484.6,101.0L482.8,102.2L481.0,101.9L479.0,101.9L477.2,101.0L475.2,100.8L473.2,100.8L471.1,100.7L469.7,99.1L468.8,97.9L470.4,96.9L472.4,97.4L474.3,97.6L475.8,96.1L477.9,97.0L479.2,94.7L481.0,94.6L482.8,94.4L484.6,94.4L486.2,93.6L487.7,91.8L489.7,92.7L491.5,92.6L493.1,91.8L495.2,93.6L496.8,92.5L498.2,90.2L500.2,91.2L501.9,90.9L503.7,92.3L505.4,91.7L507.2,89.9L508.9,92.6L510.6,92.4L512.4,90.2L514.1,91.4L516.0,91.9L517.7,91.2L519.3,90.6L521.2,91.4L522.7,88.9L524.6,90.2L526.3,89.7L528.1,90.7L529.7,88.0L531.6,90.8L533.3,90.0L535.0,88.8L536.7,88.5L538.4,87.6L540.3,89.0L542.0,89.5L543.7,89.1L545.6,87.8L547.2,90.1L549.0,89.2L550.6,91.1L552.5,89.7L554.1,90.2L555.8,91.3L557.8,89.2L559.3,91.7L561.2,90.9L563.1,90.5L564.8,92.1L566.7,92.2L568.7,91.5L570.4,92.4L572.3,92.4L574.2,92.5L572.0,92.5L570.7,94.4L569.0,94.8L567.6,96.5L565.3,94.9L563.8,96.1L562.0,98.7L563.8,100.5L562.9,102.9L560.3,103.1L561.2,105.2L559.2,106.6L556.8,107.1L557.7,109.2L555.6,109.8L555.1,111.8L553.2,112.2L552.1,113.8L550.7,114.9L548.5,114.2L546.9,117.0L544.6,115.8L542.5,116.8L540.3,116.1L538.5,118.1L535.9,118.8L534.0,120.3L531.5,120.2L529.2,120.0L527.2,121.4L525.1,123.1L523.7,125.7L522.0,128.3Z"/>
<path fill="#c9e5c3" d="M553.7,120.3L554.8,120.4L555.6,119.4L556.7,119.3L557.7,118.9L558.9,119.1L560.1,119.7L561.3,119.0L562.5,119.4L563.8,119.3L564.9,119.8L565.9,118.6L567.0,118.2L568.1,118.8L569.5,119.0L570.7,119.6L571.1,120.8L572.3,121.2L571.1,122.0L569.9,122.6L568.7,122.3L567.9,123.4L566.8,123.2L565.8,123.6L564.8,123.8L563.8,124.2L562.7,123.8L561.7,123.2L560.5,123.5L559.4,123.5L558.0,122.6L556.5,123.1L557.7,121.7L556.5,121.3L555.3,122.1L554.2,121.4Z"/>
<path fill="#9ace96" d="M392.0,178.0L396.0,178.0L402.5,180.1L407.5,180.1L407.5,179.2L410.5,179.2L413.6,182.5L414.8,183.6L416.6,184.1L417.6,182.7L419.4,182.7L421.3,185.3L422.7,186.7L423.4,188.6L426.7,189.5L425.8,192.8L425.8,196.3L426.7,198.7L428.8,201.2L431.4,202.9L434.9,202.2L437.0,202.2L438.3,200.1L438.5,198.0L442.7,197.1L444.4,197.3L443.6,199.8L443.1,201.9L442.2,202.4L440.8,203.6L437.5,204.5L436.8,206.6L438.3,206.7L435.4,209.3L433.1,207.4L430.9,206.4L427.9,207.3L424.4,206.2L420.1,204.5L415.7,202.7L413.1,200.6L412.0,198.4L412.6,196.3L410.5,193.7L407.0,190.7L405.3,188.4L403.2,186.2L400.5,184.1L398.8,180.9L396.0,179.2L396.4,181.8L398.6,184.4L400.5,187.6L402.6,190.2L403.5,192.3L405.4,194.2L404.0,194.5L400.9,191.4L400.4,189.3L397.1,186.0L396.9,184.8L394.3,181.8L392.7,179.6Z"/>
<path fill="#9ace96" d="M435.4,209.3L438.3,206.7L436.8,206.6L437.5,204.5L440.8,203.6L440.6,206.9L442.4,207.3L440.4,209.5L439.0,210.7L436.6,210.2Z"/>
<path fill="#e0f0dc" d="M440.8,203.6L442.2,202.4L442.2,206.7L440.6,206.9Z"/>
<path fill="#f1f8ef" d="M440.4,209.5L442.4,207.3L446.2,206.7L448.8,206.9L450.9,208.5L448.5,209.0L446.2,210.6L443.9,211.8L443.2,211.4Z"/>
<path fill="#e0f0dc" d="M439.0,210.7L440.4,209.5L443.2,211.4L441.3,211.6Z"/>
<path fill="#f1f8ef" d="M443.9,211.8L446.2,210.6L448.5,209.0L450.9,208.5L450.5,212.8L450.2,215.4L446.7,215.3L444.8,213.3Z"/>
<path fill="#c9e5c3" d="M446.7,215.3L450.2,215.4L452.1,217.9L451.6,220.5L449.7,218.9L446.7,217.4Z"/>
<path fill="#c9e5c3" d="M452.1,217.9L454.0,218.9L457.5,217.9L461.2,219.4L461.3,221.5L459.8,221.9L457.9,219.8L456.3,221.7L454.5,221.0L451.6,220.5Z"/>
<path fill="#e0f0dc" d="M488.9,217.2L489.9,215.8L488.2,216.0ZM488.3,213.7L488.7,213.3L488.5,213.9ZM489.2,211.6L489.6,211.3L489.4,212.0ZM489.6,209.5L490.1,208.8L489.7,210.2ZM488.3,206.7L489.4,205.9L488.7,206.9ZM488.0,205.0L488.5,204.8L488.2,205.2ZM474.2,213.0L475.8,213.5L474.9,213.5Z"/>
<path fill="#c9e5c3" d="M447.9,196.5L450.5,194.7L453.2,194.2L456.6,194.4L461.0,196.6L464.5,198.0L466.9,199.4L464.5,199.9L460.6,199.9L459.3,197.1L455.8,196.6L453.2,195.8L449.7,196.5Z"/>
<path fill="#e0f0dc" d="M466.2,202.5L468.8,199.9L471.4,199.9L474.9,200.5L477.0,202.2L474.1,202.9L471.4,203.9L469.7,202.9L466.4,202.9Z"/>
<path fill="#e0f0dc" d="M459.4,202.5L463.3,203.2L461.9,203.8Z"/>
<path fill="#c9e5c3" d="M478.9,202.4L481.7,202.5L481.0,203.2L478.9,203.2Z"/>
<path fill="#f1f8ef" d="M460.1,187.9L461.9,188.3L461.0,189.7ZM460.1,191.4L461.0,191.9L459.8,193.3Z"/>
<path fill="#5aa95a" d="M506.1,226.9L507.2,227.6L508.9,231.5L508.9,233.7L511.5,236.0L515.9,236.3L518.5,239.0L522.8,239.5L527.2,239.8L530.7,243.0L534.5,243.7L535.4,247.7L534.5,250.8L531.5,253.8L528.9,257.2L528.1,261.6L527.5,265.4L525.4,270.3L523.7,272.9L520.2,274.7L516.7,275.7L513.3,277.8L511.5,280.8L511.0,284.2L508.6,287.7L506.3,290.0L503.0,293.3L503.3,291.2L499.3,288.6L498.4,287.0L495.7,287.2L498.4,283.4L502.3,282.0L500.9,279.2L501.4,276.4L498.8,273.4L495.3,273.1L494.6,269.1L495.8,266.3L494.3,263.0L491.1,262.8L490.6,258.5L488.0,257.2L483.6,256.4L482.2,253.6L480.0,251.8L474.8,253.8L473.0,251.1L470.2,252.0L468.5,247.7L469.0,243.7L474.1,241.9L474.2,236.7L474.9,232.9L479.3,232.5L479.6,232.5L484.5,227.6L486.8,227.6L490.4,225.5L491.8,228.5L491.8,231.1L495.0,232.0L498.4,231.3L501.9,230.6Z"/>
<path fill="#f1f8ef" d="M491.5,219.8L494.1,221.9L496.2,224.1L496.4,225.9L495.0,227.6L495.0,232.0L491.8,231.1L491.8,228.5L490.4,225.5L489.2,224.1L490.6,222.8Z"/>
<path fill="#f1f8ef" d="M496.2,224.1L500.2,224.3L501.9,224.7L501.6,228.3L501.9,230.6L498.4,231.3L495.0,232.0L495.0,227.6L496.4,225.9Z"/>
<path fill="#f1f8ef" d="M501.9,224.7L502.8,224.8L505.4,226.1L506.1,226.9L504.5,230.2L501.9,230.6L501.6,228.3Z"/>
<path fill="#c9e5c3" d="M471.4,213.0L472.3,215.4L470.8,216.3L471.4,218.6L473.2,214.9L474.4,213.9L477.5,216.3L481.0,216.1L484.5,216.0L488.0,216.0L489.7,217.5L491.5,219.8L490.6,222.8L489.2,224.1L490.4,225.5L486.8,227.6L484.5,227.6L479.6,232.5L479.3,232.5L478.4,229.7L477.9,223.8L474.1,222.4L470.6,221.9L469.7,220.7L469.2,217.2L469.7,215.4Z"/>
<path fill="#9ace96" d="M461.2,219.4L463.1,218.2L464.5,216.1L466.6,215.3L468.8,214.6L471.4,213.0L469.7,215.4L469.2,217.2L469.7,220.7L470.6,221.9L474.1,222.4L477.9,223.8L478.4,229.7L479.3,232.5L474.9,232.9L474.2,236.7L474.1,241.9L470.6,239.0L468.0,236.7L465.0,234.8L461.0,233.2L458.4,232.0L459.3,230.2L461.0,228.0L461.2,223.3Z"/>
<path fill="#c9e5c3" d="M456.1,240.5L455.1,238.4L455.8,235.5L456.6,233.2L458.4,232.0L461.0,233.2L465.0,234.8L464.5,237.2L461.9,239.8L459.3,243.3L457.5,242.4L456.6,242.1Z"/>
<path fill="#c9e5c3" d="M456.1,240.5L456.6,242.1L457.5,242.4L459.3,243.3L461.9,239.8L464.5,237.2L465.0,234.8L468.0,236.7L470.6,239.0L474.1,241.9L469.0,243.7L468.5,247.7L470.2,252.0L473.0,251.1L474.8,253.8L476.2,256.4L475.8,260.7L474.9,263.3L474.9,265.1L473.4,266.5L471.4,264.7L467.1,262.1L463.6,259.0L461.9,255.9L459.3,251.1L457.2,246.8L454.5,245.1L454.4,242.4Z"/>
<path fill="#c9e5c3" d="M474.8,253.8L480.0,251.8L482.2,253.6L483.6,256.4L488.0,257.2L490.6,258.5L491.1,262.8L494.3,263.0L495.8,266.3L494.6,269.1L493.2,268.2L488.3,269.4L487.0,273.3L481.9,272.9L477.9,274.3L476.7,271.2L476.3,267.7L474.9,265.1L474.9,263.3L475.8,260.7L476.2,256.4Z"/>
<path fill="#e0f0dc" d="M494.6,269.1L495.3,273.1L498.8,273.4L501.4,276.4L500.9,279.2L499.3,282.2L494.6,282.2L495.5,278.7L491.5,276.4L487.0,273.3L488.3,269.4L493.2,268.2Z"/>
<path fill="#c9e5c3" d="M503.0,293.3L503.3,291.2L499.3,288.6L498.4,287.0L495.7,287.2L494.6,292.1L494.3,293.8L496.7,294.7L498.4,295.4L501.1,295.2Z"/>
<path fill="#9ace96" d="M476.7,271.2L477.9,274.3L481.9,272.9L487.0,273.3L491.5,276.4L495.5,278.7L494.6,282.2L499.3,282.2L500.9,279.2L502.3,282.0L498.4,283.4L495.7,287.2L494.6,292.1L494.3,293.8L496.4,296.4L497.1,298.4L495.7,301.1L492.4,302.2L488.0,302.4L487.5,305.2L482.8,306.0L484.5,308.6L482.4,312.1L478.4,314.7L481.0,317.3L477.9,320.8L476.2,323.1L476.7,325.7L472.3,325.2L470.6,323.4L468.8,321.7L469.7,318.2L471.3,314.7L471.1,311.2L472.0,307.8L471.4,303.4L472.7,299.1L474.1,294.7L473.5,290.3L474.6,286.9L476.7,282.5L476.7,277.3L478.8,276.4Z"/>
<path fill="#9ace96" d="M473.4,266.5L474.9,265.1L476.3,267.7L476.7,271.2L478.8,276.4L476.7,277.3L476.7,282.5L474.6,286.9L473.5,290.3L474.1,294.7L472.7,299.1L471.4,303.4L472.0,307.8L471.1,311.2L471.3,314.7L469.7,318.2L468.8,321.7L470.6,323.4L472.3,325.2L476.7,325.7L474.1,327.3L470.6,327.8L466.6,326.6L464.8,321.7L464.5,318.2L466.2,314.7L467.1,311.2L468.0,307.8L467.6,303.4L468.3,299.1L470.6,294.7L471.4,291.2L471.4,286.9L472.3,282.5L473.2,277.3L473.7,272.1Z"/>
<path fill="#9ace96" d="M476.5,326.2L476.8,330.2L480.2,330.4L478.4,331.3L474.9,330.9L471.4,329.5L467.1,326.9L473.2,327.3Z"/>
<path fill="#1c4f1c" d="M324.1,199.9L326.0,200.3L324.6,201.7ZM322.0,197.7L324.2,198.4L323.2,198.9ZM320.2,197.0L321.3,197.5L320.4,197.5ZM317.6,195.9L318.5,196.1L318.0,196.5Z"/>
<path fill="#c9e5c3" d="M436.4,234.9L437.8,235.1L437.1,236.3Z"/>
<path fill="#e0f0dc" d="M334.9,265.1L336.1,265.4L335.4,266.0ZM351.8,249.9L352.8,250.3L352.1,251.3ZM343.4,260.7L344.5,261.3L343.8,261.8Z"/>
<path fill="#e0f0dc" d="M295.0,258.1L297.2,258.8L295.9,259.0ZM290.5,271.4L291.1,271.5L290.8,272.1Z"/>
<path fill="#c9e5c3" d="M580.5,161.6L580.7,164.0L580.1,165.8L579.5,167.0L580.7,168.1L580.5,170.1L583.1,169.8L582.9,167.5L583.8,165.4L584.0,163.2L585.2,162.1L581.7,161.3Z"/>
<path fill="#5aa95a" d="M580.5,161.6L581.7,161.3L585.2,162.1L584.0,163.2L583.8,165.4L582.9,167.5L583.1,169.8L584.9,170.5L586.2,171.9L588.2,170.7L592.2,170.7L594.8,169.1L596.3,167.2L595.5,165.8L597.4,163.2L601.6,161.6L601.6,160.7L598.6,160.4L596.0,160.2L592.9,159.0L588.2,159.0L582.1,158.5L579.8,159.7Z"/>
<path fill="#3b8a3b" d="M592.9,159.0L596.0,160.2L598.6,160.4L601.6,160.7L601.4,159.5L603.8,159.0L606.5,159.5L609.1,158.3L607.5,156.0L608.2,154.6L606.5,154.1L609.2,151.7L610.3,149.2L607.1,148.4L606.1,148.4L603.3,147.7L600.4,145.6L598.6,147.2L596.3,148.4L594.3,148.7L592.7,148.0L593.2,149.9L590.8,149.6L588.2,149.9L587.8,151.0L592.2,152.6L593.9,154.5L593.9,156.9Z"/>
<path fill="#3b8a3b" d="M611.0,159.7L612.5,159.9L612.2,162.5L611.0,162.0Z"/>
<path fill="#9ace96" d="M600.4,145.6L603.3,147.7L606.1,148.4L606.6,147.3L606.8,146.1L606.3,145.8L604.7,145.1L601.9,145.1Z"/>
<path fill="#5aa95a" d="M601.9,145.1L604.7,145.1L606.3,145.8L606.5,144.4L608.2,143.7L608.5,141.9L606.1,141.6L604.2,142.4L603.0,144.2Z"/>
<path fill="#1c4f1c" d="M606.5,144.4L606.3,145.8L606.8,146.1L606.6,147.3L607.1,148.4L610.3,149.2L609.2,151.7L612.7,151.9L614.3,151.9L618.6,151.9L620.0,149.6L617.3,147.0L622.1,145.6L621.4,143.0L620.7,140.7L618.6,139.7L615.2,140.5L613.2,139.1L611.0,139.0L610.8,141.2L608.5,141.9L608.2,143.7Z"/>
<path fill="#9ace96" d="M611.0,139.0L613.2,139.1L614.3,137.9L613.9,136.2L614.5,134.1L612.5,135.0L610.3,135.7L610.1,137.9Z"/>
<path fill="#9ace96" d="M615.2,137.4L617.4,136.9L617.9,137.7L616.9,139.0L615.5,138.4Z"/>
<path fill="#9ace96" d="M606.5,154.1L608.2,154.6L611.7,154.6L614.3,152.9L612.7,151.9L609.2,151.7Z"/>
<path fill="#9ace96" d="M612.7,151.9L614.3,152.9L617.4,152.7L619.9,153.6L624.7,153.6L625.8,151.0L625.6,149.9L622.1,149.2L620.0,149.6L618.6,151.9L614.3,151.9Z"/>
<path fill="#5aa95a" d="M608.2,154.6L607.5,156.0L609.1,158.3L611.3,157.3L613.4,158.0L615.2,160.6L617.8,162.3L621.3,163.9L623.5,165.8L623.2,168.4L624.9,166.7L625.6,164.0L628.2,164.7L626.5,163.5L624.2,161.6L621.8,161.4L619.7,158.8L617.8,157.6L617.4,155.5L619.9,155.2L619.9,153.6L617.4,152.7L614.3,152.9L611.7,154.6Z"/>
<path fill="#5aa95a" d="M617.6,168.8L623.2,167.9L622.3,170.7L620.4,170.0Z"/>
<path fill="#5aa95a" d="M610.3,163.2L613.1,163.2L612.7,166.5L610.6,166.7Z"/>
<path fill="#1c4f1c" d="M586.1,147.5L589.9,146.8L594.3,146.3L598.4,145.4L599.0,143.0L596.3,141.4L593.4,138.8L592.5,137.2L590.8,137.0L592.9,134.4L590.8,132.5L587.3,132.5L585.5,134.4L586.2,136.5L585.2,137.7L587.3,139.1L590.3,139.0L590.8,140.7L588.0,141.8L588.9,143.1L586.9,144.4L590.4,145.1L588.2,145.8Z"/>
<path fill="#1c4f1c" d="M586.4,139.7L585.5,138.4L583.3,138.4L582.1,139.7L585.0,140.4Z"/>
<path fill="#9ace96" d="M585.5,143.7L585.5,141.8L585.0,140.4L582.1,139.7L583.3,138.4L581.2,139.1L578.6,140.9L579.5,143.1L578.1,144.4L581.2,144.7L585.0,143.7Z"/>
<path fill="#5aa95a" d="M604.5,128.3L604.7,131.8L605.8,133.2L608.2,133.6L610.8,133.0L614.3,131.3L615.2,131.8L617.8,129.2L617.3,126.6L616.9,124.0L620.4,122.2L623.0,119.1L627.4,115.3L631.7,114.4L634.3,115.3L638.7,114.9L642.2,112.8L645.6,114.4L646.5,113.2L650.0,112.1L644.8,110.7L640.9,110.7L633.5,112.1L627.4,113.0L622.1,115.3L619.5,117.0L617.8,119.6L615.2,122.2L611.7,124.0L605.6,125.7Z"/>
<path fill="#5aa95a" d="M615.2,131.8L616.6,133.6L618.3,136.7L618.5,138.1L620.9,137.9L623.9,136.2L624.7,134.4L624.9,132.7L628.2,131.0L626.0,128.9L626.5,125.7L630.0,124.0L633.5,121.7L634.8,120.0L638.0,120.0L636.9,117.0L634.3,115.3L631.7,114.4L627.4,115.3L623.0,119.1L620.4,122.2L616.9,124.0L617.3,126.6L617.8,129.2Z"/>
<path fill="#5aa95a" d="M638.0,120.0L640.4,121.4L638.7,122.2L633.5,124.9L633.1,128.3L635.2,130.1L639.5,129.7L644.4,129.2L647.4,127.5L650.9,125.0L648.3,122.2L647.4,118.8L648.3,116.7L645.6,114.4L642.2,112.8L638.7,114.9L634.3,115.3L636.9,117.0Z"/>
<path fill="#5aa95a" d="M620.7,140.7L624.7,139.7L628.4,139.3L630.3,139.8L635.7,139.8L636.9,140.7L637.6,142.8L636.4,143.7L637.1,144.9L638.0,146.1L635.4,149.1L630.0,148.4L628.7,148.4L625.6,147.0L622.1,145.6L621.4,143.0Z"/>
<path fill="#9ace96" d="M617.3,147.0L622.1,145.6L625.6,147.0L628.7,148.4L625.6,149.9L622.1,149.2L620.0,149.6Z"/>
<path fill="#c9e5c3" d="M625.6,149.9L628.7,148.4L630.0,148.4L635.4,149.1L634.5,150.3L630.8,150.6L627.4,151.3L625.8,151.0Z"/>
<path fill="#c9e5c3" d="M625.8,151.0L627.4,151.3L630.8,150.6L634.5,150.3L635.9,151.2L632.6,154.1L628.7,154.6L625.6,154.5L624.7,153.6Z"/>
<path fill="#c9e5c3" d="M619.9,153.6L624.7,153.6L623.0,155.3L619.9,155.2Z"/>
<path fill="#c9e5c3" d="M619.9,155.2L623.0,155.3L624.7,153.6L625.6,154.5L628.7,154.6L629.1,156.2L623.9,155.9L623.5,157.4L626.5,159.7L628.2,160.7L623.9,158.8L622.1,157.1L620.9,155.9L619.5,156.2Z"/>
<path fill="#e0f0dc" d="M623.9,155.9L629.1,156.2L630.1,158.0L629.4,158.8L628.2,160.7L626.5,159.7L623.5,157.4Z"/>
<path fill="#c9e5c3" d="M628.7,154.6L632.6,154.1L635.2,156.9L635.2,159.3L635.0,160.9L631.7,161.6L631.4,159.7L629.4,158.8L630.1,158.0L629.1,156.2Z"/>
<path fill="#e0f0dc" d="M628.2,160.7L629.4,158.8L631.4,159.7L630.1,161.6Z"/>
<path fill="#e0f0dc" d="M630.1,161.6L631.7,161.6L632.4,163.5L631.7,165.3L629.8,164.4L629.8,161.8Z"/>
<path fill="#e0f0dc" d="M631.7,161.6L635.0,160.9L636.1,162.7L632.4,163.5Z"/>
<path fill="#9ace96" d="M631.7,165.3L632.4,163.5L636.1,162.7L641.3,162.0L642.0,163.4L637.8,163.5L635.7,164.0L637.3,165.1L635.4,166.0L636.6,166.8L637.8,168.1L636.1,168.6L636.4,171.0L635.0,171.0L633.8,170.5L633.1,168.8L632.9,167.5L631.2,166.0Z"/>
<path fill="#9ace96" d="M636.9,172.8L641.8,173.1L641.3,173.6L637.1,173.3Z"/>
<path fill="#c9e5c3" d="M635.2,157.6L637.8,158.5L643.0,157.8L645.8,158.5L644.8,161.4L641.8,162.0L641.3,162.0L636.1,162.7L635.0,160.9L635.2,159.3Z"/>
<path fill="#c9e5c3" d="M632.6,154.1L635.9,151.2L639.4,151.3L642.3,150.6L645.1,153.6L645.0,155.3L647.7,155.9L645.8,158.5L643.0,157.8L637.8,158.5L635.2,157.6L635.2,156.9Z"/>
<path fill="#e0f0dc" d="M642.3,150.6L644.8,150.1L648.3,153.6L645.1,155.3L645.1,153.6Z"/>
<path fill="#c9e5c3" d="M636.9,131.5L644.8,131.0L643.9,134.4L638.2,133.9L634.0,132.5Z"/>
<path fill="#c9e5c3" d="M632.6,135.7L634.3,134.3L638.2,133.9L643.9,134.4L645.1,136.7L642.3,137.6L632.6,137.0Z"/>
<path fill="#c9e5c3" d="M632.6,137.0L642.3,137.6L642.7,139.1L640.4,140.2L636.9,140.7L635.7,139.8L632.9,138.4Z"/>
<path fill="#9ace96" d="M630.3,139.8L635.7,139.8L632.9,138.4L630.8,139.0Z"/>
<path fill="#c9e5c3" d="M636.9,140.7L640.4,140.2L642.7,139.1L642.3,137.6L645.1,136.7L649.8,137.7L651.7,140.9L651.4,143.8L649.1,145.2L643.0,144.9L637.1,144.9L636.4,143.7L637.6,142.8Z"/>
<path fill="#c9e5c3" d="M635.4,149.1L638.0,146.1L637.1,144.9L643.0,144.9L649.1,145.2L651.4,143.8L655.2,143.5L657.8,146.8L662.5,147.5L665.7,148.2L665.7,151.0L662.7,152.4L658.7,153.2L657.0,155.0L659.6,155.5L654.4,157.3L652.6,155.7L654.4,154.5L650.9,153.4L648.3,153.6L644.8,150.1L642.3,150.6L639.4,151.3L635.9,151.2L634.5,150.3Z"/>
<path fill="#9ace96" d="M641.5,164.9L642.5,166.7L643.6,170.1L645.3,170.7L649.1,171.4L652.6,171.7L656.4,170.5L659.1,171.0L659.6,171.5L662.2,170.5L669.7,170.0L674.0,169.8L673.5,166.7L674.0,165.4L671.8,163.0L668.3,162.3L663.1,163.2L657.0,161.4L650.0,162.8L646.5,162.8L644.8,162.1L641.8,162.0L641.3,163.7Z"/>
<path fill="#c9e5c3" d="M652.3,173.5L656.3,172.4L653.5,174.3Z"/>
<path fill="#9ace96" d="M646.5,129.7L644.4,129.2L647.4,127.5L650.9,125.0L648.3,122.2L647.4,118.8L648.3,116.7L645.6,114.4L646.5,113.2L650.0,112.1L653.5,113.7L658.7,114.1L665.7,116.5L667.8,118.6L663.1,119.5L657.8,118.9L652.6,117.7L653.5,118.8L656.1,120.3L656.6,121.7L658.7,123.1L662.2,122.2L666.2,121.4L669.2,119.3L673.2,118.8L672.6,115.3L676.1,116.7L683.1,116.5L690.1,115.8L697.0,115.3L701.4,114.8L707.5,113.9L711.0,113.5L714.5,115.3L715.3,110.9L718.8,107.4L722.3,107.8L725.8,110.0L726.6,107.8L730.1,108.3L736.2,108.8L736.2,106.6L746.7,106.0L750.2,103.4L759.7,102.0L766.7,102.2L770.2,101.3L777.2,99.2L784.1,101.0L791.1,103.1L787.6,105.7L792.8,106.6L798.1,106.4L805.0,107.4L810.3,107.1L817.2,106.6L819.8,108.3L824.2,110.9L831.2,110.0L839.9,108.3L846.8,108.3L853.8,108.8L860.8,110.9L867.8,110.9L874.7,111.3L876.5,113.4L885.2,113.5L892.1,112.5L900.9,112.8L906.1,113.5L909.6,114.7L909.6,121.4L906.9,122.2L907.8,125.7L904.3,125.7L896.5,128.0L893.0,130.1L885.2,129.6L881.3,130.3L878.2,133.9L879.9,136.7L878.2,139.0L874.7,140.2L872.1,143.1L869.0,145.8L867.8,142.3L867.1,137.0L869.5,133.6L874.7,128.3L870.4,127.5L865.1,131.5L857.3,131.0L850.3,131.3L843.4,131.8L836.4,136.2L832.9,138.8L834.7,140.5L839.9,141.4L841.6,144.0L840.8,149.2L837.3,153.6L832.0,158.3L826.8,159.3L823.5,160.7L824.2,156.4L828.6,155.7L830.6,150.5L827.7,150.6L823.3,149.4L818.1,147.8L813.8,141.9L806.8,141.8L805.0,143.1L801.2,148.4L798.9,147.8L794.6,147.2L789.4,148.4L784.1,148.7L780.7,147.0L773.7,145.8L766.7,144.0L761.5,147.7L756.3,146.3L752.8,146.6L747.6,148.9L741.5,145.8L735.4,145.8L729.8,144.9L729.3,140.2L724.0,140.5L716.2,138.1L709.2,139.5L702.3,140.5L700.5,143.1L703.1,144.0L702.3,146.1L695.3,145.8L690.1,145.4L684.0,144.9L678.7,147.0L677.0,150.1L677.9,151.0L681.4,153.8L678.7,155.2L677.9,157.1L678.7,159.7L679.6,161.6L677.0,161.6L672.6,160.2L669.2,158.8L665.7,159.0L663.1,157.4L661.3,155.7L662.2,154.5L664.5,152.7L662.7,152.4L665.7,151.0L665.7,148.2L662.5,147.5L657.8,146.8L655.2,143.5L651.4,143.8L651.7,140.9L649.8,137.7L645.1,136.7L643.9,134.4L644.8,131.0L648.3,130.3ZM284.2,115.3L289.4,117.9L294.6,118.2L300.2,119.6L297.2,120.8L292.9,122.6L289.4,122.2L284.2,120.8L282.4,121.4L282.4,114.7Z"/>
<path fill="#9ace96" d="M686.6,110.0L687.3,108.8L688.8,108.1L689.2,106.6L690.5,105.5L692.1,105.4L693.6,104.8L695.7,104.8L697.0,103.1L698.6,103.6L699.9,102.8L701.3,102.4L702.7,102.6L704.0,101.7L705.5,102.5L706.8,100.8L708.3,102.3L709.7,101.7L711.1,100.9L712.6,101.9L714.0,101.6L715.3,100.6L713.5,100.5L712.0,101.0L711.0,102.6L709.5,103.0L707.9,103.0L706.7,104.3L705.1,104.1L703.7,104.9L702.1,104.7L700.5,104.8L698.9,104.8L697.7,105.7L696.5,106.5L695.3,107.4L694.3,109.1L692.7,110.0L690.9,111.4L689.7,110.3L688.1,110.2Z"/>
<path fill="#9ace96" d="M761.5,97.0L763.2,96.5L764.5,97.7L765.8,98.4L767.3,98.1L768.8,97.7L770.2,97.1L771.8,97.3L773.2,96.9L774.6,96.1L775.8,97.2L777.5,97.2L778.9,97.9L780.9,97.0L782.4,95.6L781.0,94.9L779.5,94.3L778.1,93.7L776.3,94.8L774.7,94.8L773.2,94.3L771.9,93.1L770.5,93.9L769.0,92.9L767.6,93.3L766.1,92.6L764.7,93.9L763.2,93.8L762.9,95.7Z"/>
<path fill="#9ace96" d="M833.8,103.4L835.0,104.7L837.2,104.2L838.6,105.4L839.9,106.6L841.0,105.2L842.6,105.2L844.2,105.1L845.9,105.2L847.4,104.8L848.6,103.6L850.0,104.5L851.5,103.7L852.9,104.1L854.4,103.8L855.9,102.9L857.3,103.9L855.8,104.0L854.3,104.1L853.1,102.9L851.5,103.4L850.3,102.2L848.9,101.1L847.4,101.6L845.8,102.0L844.4,101.3L842.9,101.2L841.4,101.3L839.9,101.3L838.5,102.2L836.9,102.5L835.3,102.9Z"/>
<path fill="#9ace96" d="M909.6,110.3L909.6,111.3L906.9,110.6ZM285.1,110.0L287.7,110.9L282.4,111.3L282.4,110.3Z"/>
<path fill="#9ace96" d="M843.4,154.5L846.0,153.6L845.1,148.4L845.5,144.0L844.4,140.0L842.8,141.4L843.4,147.5L843.2,153.6Z"/>
<path fill="#c9e5c3" d="M665.7,159.0L669.2,158.8L672.6,160.2L677.0,161.6L674.4,162.8L671.8,163.0L668.3,162.3Z"/>
<path fill="#c9e5c3" d="M671.8,163.0L674.4,162.8L677.0,166.7L674.0,165.4Z"/>
<path fill="#c9e5c3" d="M674.4,162.8L677.0,161.6L679.6,161.6L682.2,164.6L681.0,167.7L677.0,166.7Z"/>
<path fill="#9ace96" d="M674.0,165.4L673.5,166.7L674.0,169.8L675.3,172.8L676.1,176.2L679.3,178.9L680.5,182.3L684.0,183.2L685.7,186.0L690.9,188.4L694.2,187.4L696.2,189.8L703.3,190.7L705.7,187.2L705.4,183.4L702.1,182.7L703.3,179.9L701.6,176.2L702.4,170.8L698.8,169.4L692.7,168.4L690.1,169.6L684.8,170.5L681.4,169.1L681.0,167.7L677.0,166.7Z"/>
<path fill="#c9e5c3" d="M669.7,170.0L674.0,169.8L675.3,172.8L676.1,176.2L679.3,178.9L680.5,182.3L679.1,182.3L678.6,184.1L673.9,183.7L669.2,180.4L663.9,178.5L663.6,176.4L667.4,174.7Z"/>
<path fill="#e0f0dc" d="M658.4,172.2L658.5,174.3L659.6,174.5L658.7,176.2L658.5,177.6L663.6,176.4L667.4,174.7L669.7,170.0L662.2,170.5L659.6,171.5Z"/>
<path fill="#e0f0dc" d="M657.1,176.9L658.7,176.2L659.6,174.5L658.5,174.3Z"/>
<path fill="#9ace96" d="M655.8,180.1L657.1,176.9L658.5,177.6L657.8,179.7L657.0,183.2L656.8,183.2Z"/>
<path fill="#c9e5c3" d="M658.5,177.6L663.6,176.4L663.9,178.5L660.5,179.7L662.2,182.3L659.6,183.4L657.0,183.2L657.8,179.7Z"/>
<path fill="#5aa95a" d="M659.6,183.4L662.2,182.3L660.5,179.7L663.9,178.5L669.2,180.4L673.9,183.7L678.6,184.1L680.5,185.8L682.2,188.4L684.5,191.4L685.7,192.3L692.7,195.1L691.8,199.8L686.6,201.5L681.4,202.2L677.0,204.5L671.8,204.1L670.6,206.0L668.3,202.4L663.9,197.1L663.1,193.7L660.5,190.2L657.8,186.7L656.8,185.0L657.0,183.4Z"/>
<path fill="#e0f0dc" d="M670.6,206.0L671.8,204.1L677.0,204.5L681.4,202.2L686.6,201.5L688.5,205.7L686.6,207.3L681.4,209.3L675.3,212.0L671.8,212.5L670.4,208.5Z"/>
<path fill="#c9e5c3" d="M686.6,201.5L691.8,199.8L692.7,195.1L694.1,191.2L695.3,192.8L697.9,193.5L700.2,195.4L697.9,199.1L696.5,201.7L694.4,203.2L691.8,205.0L688.5,205.7Z"/>
<path fill="#c9e5c3" d="M685.7,192.3L690.1,192.6L693.6,189.7L694.1,191.2L692.7,195.1Z"/>
<path fill="#c9e5c3" d="M684.5,191.4L685.9,190.7L685.4,189.1L684.7,190.0Z"/>
<path fill="#c9e5c3" d="M679.1,182.3L680.5,185.0L678.6,184.1Z"/>
<path fill="#e0f0dc" d="M703.3,179.9L701.6,176.2L702.4,170.8L708.4,170.1L714.1,169.8L717.9,169.3L720.6,168.6L726.5,169.8L720.6,171.0L719.7,175.4L717.1,176.2L718.5,179.7L711.8,182.5L705.4,183.4L702.1,182.7Z"/>
<path fill="#9ace96" d="M703.3,190.7L708.4,190.7L712.2,190.2L713.6,192.8L715.7,193.0L718.8,189.8L717.9,185.8L721.4,183.2L725.8,180.6L726.6,178.0L724.9,174.5L730.1,172.4L726.6,170.1L726.5,169.8L720.6,171.0L719.7,175.4L717.1,176.2L718.5,179.7L711.8,182.5L705.4,183.4L705.7,187.2Z"/>
<path fill="#5aa95a" d="M715.7,193.0L715.3,194.5L717.9,195.4L716.2,195.8L718.8,198.4L722.5,197.5L723.0,201.5L724.0,206.7L726.3,212.3L728.9,218.1L731.0,220.5L732.2,219.1L735.0,216.7L735.9,212.0L735.7,207.6L739.4,205.7L743.2,201.9L747.4,198.5L749.6,196.8L751.0,196.3L750.5,192.3L749.3,190.2L749.6,188.6L752.4,188.8L756.3,187.9L752.8,190.7L757.1,191.1L756.3,193.7L757.1,194.5L758.5,193.0L760.6,190.2L762.4,187.6L765.0,185.8L763.2,183.4L757.1,186.2L755.4,186.2L752.4,187.9L750.7,187.0L749.6,186.0L749.6,188.6L742.3,186.7L735.5,184.4L738.0,181.6L733.6,179.7L732.7,178.0L735.4,172.8L731.5,172.8L730.1,172.4L724.9,174.5L726.6,178.0L725.8,180.6L721.4,183.2L717.9,185.8L718.8,189.8Z"/>
<path fill="#e0f0dc" d="M735.5,184.4L738.0,181.6L745.8,185.8L749.6,186.0L749.6,188.6L742.3,186.7Z"/>
<path fill="#f1f8ef" d="M750.7,187.0L752.4,187.9L755.4,186.2L752.8,185.5Z"/>
<path fill="#c9e5c3" d="M749.6,196.8L751.0,196.3L753.7,196.3L756.8,198.5L757.1,194.5L756.3,193.7L757.1,191.1L752.8,190.7L749.6,188.6L749.3,190.2L750.5,192.3Z"/>
<path fill="#c9e5c3" d="M735.0,224.1L735.2,219.8L735.9,217.5L738.7,221.5L738.0,223.8L736.2,224.3Z"/>
<path fill="#f1f8ef" d="M756.8,198.5L758.0,200.6L760.3,203.2L760.6,206.7L762.4,207.1L766.0,205.9L766.4,208.8L767.8,212.8L767.8,217.2L768.8,213.7L767.6,211.1L767.1,208.5L767.8,206.2L766.4,203.9L766.7,202.4L768.5,200.1L770.2,199.4L771.9,197.1L769.3,196.1L767.9,192.8L766.7,189.3L767.9,186.7L765.8,185.3L765.0,185.8L762.4,187.6L760.6,190.2L758.5,193.0L757.1,194.5Z"/>
<path fill="#9ace96" d="M770.2,199.4L772.3,200.6L772.8,203.6L777.2,203.6L779.8,206.7L779.3,209.7L774.6,210.2L774.6,213.7L771.8,212.7L770.2,211.1L768.8,216.7L770.7,219.8L771.9,222.8L770.4,223.3L767.2,220.7L767.8,217.2L768.8,213.7L767.6,211.1L767.1,208.5L767.8,206.2L766.4,203.9L766.7,202.4L768.5,200.1Z"/>
<path fill="#c9e5c3" d="M771.9,197.1L774.0,195.6L775.4,197.1L778.0,198.9L778.0,201.9L781.5,205.9L783.3,208.1L780.7,210.4L779.3,209.7L779.8,206.7L777.2,203.6L772.8,203.6L772.3,200.6L770.2,199.4Z"/>
<path fill="#e0f0dc" d="M774.0,195.6L776.3,195.1L780.7,194.7L784.1,197.1L781.5,199.8L780.3,201.5L782.4,205.0L785.5,207.6L786.4,212.0L785.9,214.6L782.4,216.3L778.9,219.6L778.6,216.7L780.7,215.4L783.3,213.2L783.3,208.1L781.5,205.9L778.0,201.9L778.0,198.9L775.4,197.1Z"/>
<path fill="#c9e5c3" d="M774.6,210.2L779.3,209.7L780.7,210.4L783.3,209.3L783.3,213.2L780.7,215.4L778.6,216.7L776.3,216.1L774.6,213.7Z"/>
<path fill="#9ace96" d="M770.4,223.5L771.9,222.8L773.9,223.8L776.1,226.8L776.3,229.7L777.5,232.2L776.1,232.3L772.5,229.7L770.7,226.8L770.9,225.0Z"/>
<path fill="#9ace96" d="M786.9,231.3L785.9,232.0L786.9,231.1L789.4,231.8L792.8,229.0L796.3,226.1L798.9,223.3L801.0,223.6L803.8,225.4L801.6,227.1L799.8,227.3L797.2,229.4L793.7,232.0L789.4,232.5Z"/>
<path fill="#c9e5c3" d="M785.9,232.0L786.9,231.3L789.4,232.5L793.7,232.0L797.2,229.4L799.8,227.3L801.6,227.1L801.2,232.0L803.1,233.2L800.7,234.6L799.8,236.3L798.9,239.0L798.1,241.4L795.5,240.7L790.2,239.8L788.0,239.7L787.6,237.2L785.9,235.1Z"/>
<path fill="#c9e5c3" d="M762.0,224.8L765.8,225.5L770.2,230.2L776.8,233.7L778.0,237.2L780.7,240.2L780.3,244.7L778.0,244.9L774.6,241.6L771.1,236.3L767.6,231.5L763.2,228.0Z"/>
<path fill="#c9e5c3" d="M779.3,246.4L781.5,245.1L785.0,246.1L789.4,245.9L792.5,246.6L795.5,248.2L795.5,249.8L789.4,248.9L784.1,248.2L779.8,246.8Z"/>
<path fill="#c9e5c3" d="M802.9,239.8L804.2,244.2L805.7,244.4L805.7,239.5L806.8,239.1L808.5,242.6L810.6,242.8L808.9,239.8L807.7,237.2L810.8,236.3L807.7,235.8L805.6,234.1L805.9,232.3L808.5,232.9L812.9,232.0L814.1,232.0L812.0,233.9L807.7,233.7L805.0,233.7L804.7,235.5Z"/>
<path fill="#c9e5c3" d="M824.2,237.2L824.0,236.0L829.4,236.2L831.2,240.3L835.5,237.2L841.6,239.1L841.6,250.5L838.1,248.7L836.4,247.7L836.0,243.3L831.2,242.3L827.7,241.6L825.9,239.5Z"/>
<path fill="#e0f0dc" d="M841.6,239.1L847.7,241.2L850.3,244.2L853.5,245.6L853.8,248.5L857.3,252.5L853.8,252.4L850.3,249.4L846.8,248.2L845.8,250.3L841.6,250.5Z"/>
<path fill="#e0f0dc" d="M857.3,244.2L860.8,241.9L859.9,245.1L855.6,245.4ZM861.7,240.7L858.2,239.1L862.5,242.4Z"/>
<path fill="#e0f0dc" d="M812.0,252.0L814.1,249.2L817.8,249.2L812.7,252.4Z"/>
<path fill="#c9e5c3" d="M796.3,248.7L798.1,249.6L796.7,249.9ZM798.2,249.1L799.8,248.9L803.3,249.2L802.4,250.1L798.9,250.3ZM804.7,249.4L810.3,248.9L809.4,249.9L805.0,250.1ZM803.3,251.0L806.4,251.8L805.0,252.4Z"/>
<path fill="#c9e5c3" d="M818.1,232.0L819.8,232.9L819.0,235.5L818.1,234.6ZM818.6,240.2L823.3,239.8L823.9,241.2L819.8,241.2ZM815.5,240.2L817.6,240.3L816.4,241.2Z"/>
<path fill="#c9e5c3" d="M805.0,206.7L806.1,202.4L808.9,202.4L808.5,205.0L807.8,207.1L808.5,210.2L812.0,212.0L810.3,211.1L806.8,210.6L806.1,209.3Z"/>
<path fill="#c9e5c3" d="M808.5,222.4L811.1,219.8L814.6,217.5L816.4,221.5L814.6,224.1L812.0,223.3Z"/>
<path fill="#c9e5c3" d="M808.5,214.0L810.3,215.8L809.9,218.1L808.5,216.3ZM812.0,214.6L815.1,212.8L814.6,217.2L812.5,216.7ZM800.2,219.8L804.2,216.3L803.3,215.8L799.8,220.1ZM805.9,211.4L807.7,212.0L806.8,213.3Z"/>
<path fill="#9ace96" d="M805.2,194.5L806.8,190.7L808.5,191.1L806.4,196.3Z"/>
<path fill="#276b27" d="M785.2,201.2L787.6,199.6L789.4,200.5L786.9,202.9Z"/>
<path fill="#276b27" d="M812.5,164.9L807.7,163.4L804.2,165.3L801.2,166.7L803.1,169.4L806.3,170.1L809.4,169.8L805.0,173.6L806.6,177.8L808.3,180.6L807.7,185.0L804.3,190.2L799.8,193.7L794.9,195.8L789.4,197.3L788.0,199.1L784.1,197.1L780.7,194.7L776.3,195.1L774.0,195.6L771.9,197.1L769.3,196.1L767.9,192.8L766.7,189.3L767.9,186.7L765.8,185.3L765.0,185.8L763.2,183.4L757.1,186.2L755.4,186.2L752.8,185.5L750.7,187.0L749.6,186.0L745.8,185.8L738.0,181.6L733.6,179.7L732.7,178.0L735.4,172.8L731.5,172.8L730.1,172.4L726.6,170.1L726.5,169.8L726.6,167.5L724.4,166.0L728.4,164.2L732.7,162.3L735.7,161.1L735.9,156.2L739.7,155.3L740.6,152.4L744.9,152.7L747.6,148.9L749.3,150.1L753.7,154.5L754.5,156.2L758.0,156.2L763.2,160.2L770.2,160.4L778.9,162.1L787.6,160.4L790.2,158.5L795.5,156.6L798.9,153.8L801.6,153.2L804.5,153.2L800.7,151.7L798.1,151.3L801.2,148.4L805.0,143.1L806.8,141.8L813.8,141.9L818.1,147.8L823.3,149.4L827.7,150.6L830.6,150.5L828.6,155.7L824.2,156.4L823.5,160.7L820.7,160.9L819.0,161.4L815.5,163.2Z"/>
<path fill="#e0f0dc" d="M747.6,148.9L752.8,146.6L756.3,146.3L761.5,147.7L766.7,144.0L773.7,145.8L780.7,147.0L784.1,148.7L789.4,148.4L794.6,147.2L798.9,147.8L801.2,148.4L798.1,151.3L800.7,151.7L804.5,153.2L801.6,153.2L798.9,153.8L795.5,156.6L790.2,158.5L787.6,160.4L778.9,162.1L770.2,160.4L763.2,160.2L758.0,156.2L754.5,156.2L753.7,154.5L749.3,150.1Z"/>
<path fill="#5aa95a" d="M816.4,168.9L819.8,167.4L821.6,171.9L821.2,173.3L818.1,174.3L816.0,174.5L816.9,171.9L815.8,170.1Z"/>
<path fill="#5aa95a" d="M824.0,175.4L826.8,172.8L832.0,172.4L834.3,169.6L837.3,169.3L839.9,164.9L839.9,162.5L842.5,162.8L843.4,165.8L841.6,168.1L841.3,171.0L840.4,173.3L838.1,174.2L834.7,174.3L832.0,176.2L831.2,174.3L825.9,175.7Z"/>
<path fill="#5aa95a" d="M839.9,162.3L839.5,160.6L842.8,155.3L845.1,157.1L849.5,159.0L845.6,161.4L841.6,161.8Z"/>
<path fill="#5aa95a" d="M821.9,176.6L824.2,175.5L825.9,177.5L824.2,180.2L822.8,179.9Z"/>
<path fill="#5aa95a" d="M825.9,177.1L828.6,174.8L830.6,175.0L829.8,176.6L827.7,177.5Z"/>
<path fill="#e0f0dc" d="M681.4,153.8L677.9,151.0L677.0,150.1L678.7,147.0L684.0,144.9L690.1,145.4L695.3,145.8L702.3,146.1L703.1,144.0L700.5,143.1L702.3,140.5L709.2,139.5L716.2,138.1L724.0,140.5L729.3,140.2L729.8,144.9L735.4,145.8L741.5,145.8L747.6,148.9L744.9,152.7L740.6,152.4L739.7,155.3L735.9,156.2L735.7,161.1L733.6,160.0L726.6,160.0L719.7,160.9L716.2,163.2L711.8,161.4L711.0,159.7L704.0,158.8L697.9,155.3L693.6,156.2L693.6,162.7L690.9,162.8L687.5,161.8L685.4,159.3L683.6,157.1L684.8,155.9L688.3,155.7L688.7,153.1L685.7,152.7Z"/>
<path fill="#e0f0dc" d="M693.6,156.2L697.9,155.3L704.0,158.8L711.0,159.7L711.8,161.4L716.2,163.2L719.7,160.9L719.7,162.3L723.2,163.5L718.8,164.6L716.2,164.0L715.0,167.5L714.1,169.8L711.8,169.4L707.5,166.7L704.0,164.0L700.5,161.4L697.0,160.2L693.6,162.7Z"/>
<path fill="#f1f8ef" d="M687.5,161.8L690.9,162.8L693.6,162.7L697.0,160.2L700.5,161.4L704.0,164.0L707.5,166.7L711.8,169.4L708.4,170.1L702.4,170.8L698.8,169.4L692.7,168.4L690.1,169.6L689.9,166.7L688.3,164.9L688.0,163.2Z"/>
<path fill="#e0f0dc" d="M719.7,160.9L726.6,160.0L733.6,160.0L735.7,161.1L732.7,162.3L728.4,164.2L724.4,166.0L717.1,165.6L718.8,164.6L723.2,163.5L719.7,162.3Z"/>
<path fill="#e0f0dc" d="M717.1,165.6L724.4,166.0L726.6,167.5L726.5,169.8L720.6,168.6L717.9,169.3L714.1,169.8L715.0,167.5L716.2,164.0L718.8,164.6Z"/>
<path fill="#c9e5c3" d="M585.7,172.2L588.2,173.3L592.5,173.5L593.0,175.4L593.2,178.0L589.0,179.7L587.3,182.3L580.8,184.6L580.8,186.3L573.4,186.3L576.0,185.8L578.9,183.2L579.3,178.9L582.1,175.9L584.7,174.5Z"/>
<path fill="#f1f8ef" d="M580.8,186.3L580.8,189.3L575.1,189.3L575.1,193.7L573.4,194.5L573.4,197.5L566.4,198.0L568.1,193.7L569.9,191.9L573.4,188.4L573.4,186.3Z"/>
<path fill="#c9e5c3" d="M592.5,173.5L597.7,171.0L601.2,170.5L611.0,170.3L610.5,174.3L612.5,182.0L613.2,188.4L616.7,193.7L606.5,200.6L603.3,201.2L598.1,198.4L587.6,191.1L580.8,187.0L580.8,184.6L587.3,182.3L589.0,179.7L593.2,178.0L593.0,175.4Z"/>
<path fill="#9ace96" d="M611.0,170.3L613.8,169.6L615.3,170.3L614.3,172.8L613.8,175.0L616.0,176.8L613.4,179.7L612.5,182.0L610.5,174.3Z"/>
<path fill="#e0f0dc" d="M616.0,176.8L622.1,178.2L623.0,180.2L627.4,181.3L630.8,180.6L630.8,178.7L633.5,177.3L636.1,178.0L639.5,179.6L639.5,196.3L637.8,199.8L637.8,200.6L623.9,193.8L620.7,195.2L616.7,193.7L613.2,188.4L612.5,182.0L613.4,179.7Z"/>
<path fill="#9ace96" d="M639.5,179.6L646.5,180.8L650.0,179.6L652.3,180.1L655.6,180.1L656.8,183.2L655.8,186.2L652.8,182.5L654.4,187.6L657.8,192.8L660.3,196.3L639.5,196.3Z"/>
<path fill="#e0f0dc" d="M637.8,199.8L639.5,196.3L660.3,196.3L660.8,198.0L661.3,202.4L663.2,203.2L660.5,205.0L659.6,209.7L657.3,214.6L655.2,218.1L653.5,216.3L649.1,217.5L643.0,218.1L637.8,219.4L636.9,215.8L634.3,212.8L635.2,210.2L637.8,207.6L637.8,200.6Z"/>
<path fill="#e0f0dc" d="M637.8,219.4L643.0,218.1L649.1,217.5L653.5,216.3L655.2,218.1L653.5,220.7L657.0,225.9L658.5,226.6L655.2,227.3L649.7,228.5L643.9,225.9L639.5,225.9L638.7,220.7Z"/>
<path fill="#f1f8ef" d="M637.8,200.6L623.9,193.8L620.7,195.2L623.0,198.9L623.0,203.2L619.5,210.2L619.5,212.0L620.4,212.8L622.1,217.2L620.4,218.1L623.0,221.5L628.2,220.7L633.5,217.5L636.9,215.8L634.3,212.8L635.2,210.2L637.8,207.6Z"/>
<path fill="#e0f0dc" d="M616.7,193.7L620.7,195.2L623.0,198.9L623.0,203.2L619.5,210.2L617.8,211.8L611.7,212.3L603.0,211.1L602.3,214.2L599.5,212.8L597.7,211.4L596.3,208.6L602.3,207.6L603.3,201.2L606.5,200.6Z"/>
<path fill="#e0f0dc" d="M587.6,191.1L598.1,198.4L603.3,201.2L602.3,207.6L596.3,208.6L595.1,208.5L590.8,210.9L586.8,214.0L586.4,216.5L582.1,216.8L581.2,214.7L576.1,213.0L575.1,209.0L576.0,207.6L586.4,206.0Z"/>
<path fill="#f1f8ef" d="M580.8,187.0L587.6,191.1L586.4,206.0L576.0,207.6L574.6,208.8L567.3,206.4L567.6,201.5L566.4,198.0L573.4,197.5L573.4,194.5L575.1,193.7L575.1,189.3L580.8,189.3Z"/>
<path fill="#c9e5c3" d="M567.3,206.4L574.6,208.8L576.0,207.6L575.1,209.0L576.1,213.0L572.1,212.8L566.9,213.0L565.5,209.0Z"/>
<path fill="#e0f0dc" d="M566.9,213.0L572.1,212.8L576.1,213.0L581.2,214.7L582.1,216.8L582.2,219.8L579.5,221.5L577.7,220.0L573.4,220.1L570.7,216.3Z"/>
<path fill="#e0f0dc" d="M573.4,220.1L577.7,220.0L579.5,221.5L582.2,219.8L582.9,226.9L576.8,222.8Z"/>
<path fill="#e0f0dc" d="M582.2,219.8L582.1,216.8L586.4,216.5L591.1,218.1L591.1,225.9L589.0,225.5L582.9,226.9Z"/>
<path fill="#c9e5c3" d="M586.4,216.5L586.8,214.0L590.8,210.9L595.1,208.5L596.3,208.6L597.7,211.4L599.5,212.8L597.6,215.4L591.1,215.4L591.1,218.1Z"/>
<path fill="#c9e5c3" d="M591.1,215.4L597.6,215.4L596.9,219.8L597.7,224.3L592.5,226.2L591.1,225.9L591.1,218.1Z"/>
<path fill="#c9e5c3" d="M597.6,215.4L599.5,212.8L602.3,214.2L600.7,218.9L600.7,223.6L597.7,224.3L596.9,219.8Z"/>
<path fill="#c9e5c3" d="M600.7,223.6L600.7,218.9L602.3,214.2L603.0,211.1L611.7,212.3L617.8,211.8L619.5,212.0L620.4,212.8L618.6,218.1L616.6,222.4L612.5,223.3L610.8,226.6L606.5,227.1L603.8,223.6Z"/>
<path fill="#c9e5c3" d="M610.8,226.6L612.5,223.3L616.6,222.4L618.6,218.1L620.4,212.8L622.1,217.2L620.4,218.1L623.0,221.5L621.3,226.8L623.9,230.8L618.6,230.8L613.1,230.6L612.5,227.6Z"/>
<path fill="#f1f8ef" d="M621.3,226.8L623.0,221.5L628.2,220.7L633.5,217.5L636.9,215.8L637.8,219.4L638.7,220.7L639.5,225.9L635.2,227.1L629.1,227.6L626.5,228.5L623.9,230.8Z"/>
<path fill="#e0f0dc" d="M613.1,230.6L618.6,230.8L623.9,230.8L626.5,228.5L627.4,232.9L624.7,238.1L623.5,241.6L617.3,245.1L616.6,242.4L612.2,238.1L612.7,233.7Z"/>
<path fill="#c9e5c3" d="M617.3,245.1L623.5,241.6L624.7,238.1L627.4,232.9L626.5,228.5L629.1,227.6L635.2,227.1L639.5,225.9L643.9,225.9L649.7,228.5L647.9,232.9L647.4,237.2L646.9,242.4L648.3,248.5L645.6,249.4L645.6,253.8L647.4,256.4L643.9,255.5L637.8,253.8L634.3,253.8L634.0,247.7L630.0,246.8L626.5,248.5L624.7,245.1L618.6,245.1Z"/>
<path fill="#c9e5c3" d="M649.7,228.5L655.2,227.3L657.0,232.0L655.2,236.3L648.3,236.3L647.9,232.9Z"/>
<path fill="#c9e5c3" d="M655.2,227.3L658.5,226.6L662.2,228.3L667.4,227.6L667.4,237.7L665.3,241.6L661.3,239.8L655.2,236.3L657.0,232.0Z"/>
<path fill="#e0f0dc" d="M647.4,237.2L648.3,236.3L649.7,238.6L648.8,242.1L646.9,242.4Z"/>
<path fill="#c9e5c3" d="M648.3,236.3L655.2,236.3L661.3,239.8L665.3,241.6L664.5,246.4L664.8,252.0L666.6,253.8L662.2,254.3L657.0,254.6L656.1,251.1L652.6,250.8L649.1,248.9L648.3,248.5L646.9,242.4L648.8,242.1L649.7,238.6Z"/>
<path fill="#c9e5c3" d="M659.6,209.7L660.5,205.0L663.2,203.2L665.2,207.6L667.8,209.3L669.9,212.8L670.6,215.4L671.4,213.9L672.6,218.9L679.4,220.7L674.4,225.9L668.8,227.6L667.4,227.6L662.2,228.3L658.5,226.6L657.0,225.9L653.5,220.7L655.2,218.1L657.3,214.6Z"/>
<path fill="#e0f0dc" d="M659.6,209.7L660.5,205.0L663.2,203.2L665.2,207.6L667.8,209.3L671.1,212.5L669.9,212.8L665.7,209.3L662.2,209.3Z"/>
<path fill="#f1f8ef" d="M670.6,215.4L671.4,213.9L673.5,216.5L677.9,215.3L685.4,214.0L684.8,216.5L683.1,221.5L679.6,226.8L676.1,231.1L670.9,235.5L668.3,237.7L667.4,237.7L667.4,227.6L668.8,227.6L674.4,225.9L679.4,220.7L672.6,218.9Z"/>
<path fill="#f1f8ef" d="M617.3,245.1L618.6,245.1L624.7,245.1L626.5,248.5L630.0,246.8L634.0,247.7L634.3,253.8L637.8,253.8L637.8,257.2L634.3,257.2L634.3,262.5L636.9,265.1L630.8,265.1L619.5,264.7L616.6,264.2L617.8,258.1L619.5,254.6L618.6,249.4Z"/>
<path fill="#e0f0dc" d="M634.3,257.2L637.8,257.2L637.8,253.8L643.9,255.5L647.4,256.4L645.6,253.8L645.6,249.4L649.1,248.9L652.6,250.8L653.8,253.8L653.5,259.0L648.3,261.6L644.8,263.3L640.4,265.6L636.9,265.1L634.3,262.5Z"/>
<path fill="#c9e5c3" d="M652.6,250.8L656.1,251.1L657.0,254.6L657.8,259.9L657.3,264.2L655.2,260.7L653.5,259.0L653.8,253.8Z"/>
<path fill="#e0f0dc" d="M657.0,254.6L662.2,254.3L666.6,253.8L666.9,260.7L660.5,265.1L657.0,269.4L657.8,272.9L657.8,276.4L653.3,279.7L651.7,281.3L650.9,276.4L652.6,272.9L653.5,266.0L653.1,263.3L649.1,262.5L648.3,261.6L653.5,259.0L655.2,260.7L657.3,264.2L657.8,259.9Z"/>
<path fill="#c9e5c3" d="M640.4,265.6L644.8,263.3L648.3,261.6L649.1,262.5L653.1,263.3L653.5,266.0L652.6,272.9L650.9,273.4L646.5,273.3L643.9,270.3L641.3,268.6Z"/>
<path fill="#e0f0dc" d="M616.6,264.2L619.5,264.7L630.8,265.1L636.9,265.1L640.4,265.6L636.1,266.3L632.6,266.5L632.6,272.9L630.8,272.9L630.8,284.1L625.6,284.4L622.7,281.6L621.3,274.7L619.5,269.4Z"/>
<path fill="#e0f0dc" d="M632.6,266.5L636.1,266.3L640.4,265.6L641.3,268.6L643.9,270.3L646.5,273.3L643.0,276.1L641.3,277.6L639.5,279.5L636.1,278.7L630.8,277.8L630.8,272.9L632.6,272.9Z"/>
<path fill="#9ace96" d="M625.6,284.4L630.8,284.1L630.8,277.8L636.1,278.7L639.5,279.5L641.3,277.6L643.0,276.1L646.5,273.3L650.9,273.4L651.7,281.3L653.1,283.4L650.0,286.9L644.8,292.1L640.8,293.8L635.2,293.8L630.8,295.2L628.1,294.2L627.4,291.2Z"/>
<path fill="#e0f0dc" d="M681.9,255.5L684.0,261.6L682.2,266.0L678.7,277.3L674.4,279.0L671.8,272.9L672.6,266.8L676.1,262.5L679.6,258.1Z"/>
<path fill="#e0f0dc" d="M643.0,286.2L645.1,284.4L647.2,285.6L646.5,287.4L644.4,287.9Z"/>
<path fill="#e0f0dc" d="M650.0,279.9L651.7,279.9L651.7,282.0L650.4,282.2Z"/>
<path fill="#3b8a3b" d="M794.1,272.9L794.9,279.9L793.7,279.0L796.3,286.0L797.5,290.3L796.3,294.4L801.6,295.6L806.8,293.5L812.0,292.1L815.5,290.9L820.7,289.6L825.1,289.5L829.4,291.7L832.0,295.2L835.5,292.1L836.4,296.4L839.9,299.9L845.1,302.2L850.9,302.7L857.3,299.9L859.4,293.8L862.5,288.6L863.6,284.2L862.5,279.0L858.7,273.8L854.7,269.4L850.3,266.0L849.1,260.7L846.0,259.0L844.2,253.2L842.5,257.2L842.5,260.7L841.3,265.1L838.1,264.2L834.7,262.1L832.0,260.4L834.3,255.9L831.2,255.5L826.8,254.3L824.2,256.0L821.6,260.6L818.1,259.0L815.5,259.3L812.0,263.0L808.9,266.0L803.3,269.4L798.9,270.7Z"/>
<path fill="#3b8a3b" d="M847.9,305.5L854.3,305.8L853.8,309.9L851.7,310.6L848.9,308.1Z"/>
<path fill="#9ace96" d="M896.8,294.5L900.0,298.2L902.2,299.1L906.9,300.3L904.3,303.4L902.6,306.5L900.5,306.5L898.8,302.9L900.2,299.1Z"/>
<path fill="#9ace96" d="M896.8,305.2L899.6,307.2L897.4,310.4L893.9,313.0L890.4,315.8L886.0,314.7L889.5,311.2L894.8,307.4Z"/>
<path fill="#e0f0dc" d="M881.7,269.8L886.9,273.4L883.4,272.1Z"/>
<path fill="#c9e5c3" d="M904.9,265.1L906.9,265.6L906.1,266.5Z"/>
<path fill="#e0f0dc" d="M868.6,246.1L873.8,248.9L870.4,248.2ZM873.8,250.3L876.5,251.7L874.7,252.0Z"/>
<path fill="#e0f0dc" d="M886.0,260.7L887.8,263.3L886.6,262.1Z"/></g>
<g fill="#003300">
 <rect x="273.5" y="77.5" width="17.6" height="54.5" rx="8.8"/>
 <rect x="263.7" y="95.6" width="36.3" height="18.4" rx="9.2"/>
 <rect x="273.5" y="136.8" width="17.6" height="54.3" rx="8.8"/>
</g>
<g fill="#ffffff">
 <path d="M282.2,82.3 L287.3,91 L277.1,91Z"/>
 <path d="M282.2,128.3 L287.3,119.6 L277.1,119.6Z"/>
 <path d="M268,104.8 L276.6,99.7 L276.6,109.9Z"/>
 <path d="M296.4,104.8 L287.8,99.7 L287.8,109.9Z"/>
 <rect x="276.8" y="145.7" width="10.8" height="2.8"/>
 <rect x="280.8" y="141.7" width="2.8" height="10.8"/>
 <rect x="276.8" y="179.6" width="10.8" height="2.8"/>
</g>
<g fill="none" stroke="#8f8fff" stroke-width="0.8">
 <circle cx="282.2" cy="165" r="8.4"/>
 <ellipse cx="282.2" cy="165" rx="5" ry="8.4"/>
 <ellipse cx="282.2" cy="165" rx="2" ry="8.4"/>
 <line x1="273.8" y1="165" x2="290.6" y2="165"/>
 <line x1="274.8" y1="161" x2="289.6" y2="161"/>
 <line x1="274.8" y1="169" x2="289.6" y2="169"/>
 <line x1="276.8" y1="158" x2="287.6" y2="158"/>
 <line x1="276.8" y1="172" x2="287.6" y2="172"/>
</g>
</svg></div>
<div style="position:absolute;left:256.00px;top:400.00px;width:150.00px;height:20.00px;background:linear-gradient(to right,#ffffff 0%,#c9dfc9 25%,#7fb27f 50%,#2f8a2f 72%,#0a6e0a 85%,#004400 100%)"></div>
<div style="position:absolute;top:400.84px;font-size:12px;line-height:12px;font-weight:normal;color:#1a1a3a;white-space:nowrap;left:256.50px;">0</div>
<div style="position:absolute;top:400.84px;font-size:12px;line-height:12px;font-weight:normal;color:#1a1a1a;white-space:nowrap;letter-spacing:0.30px;left:338.00px;">72,243</div>
<div style="position:absolute;left:246.00px;top:430.00px;width:714.00px;height:1.00px;background:#d9d9d9"></div>
<div style="position:absolute;top:441.85px;font-size:14px;line-height:14px;font-weight:bold;color:#2b2b2b;white-space:nowrap;letter-spacing:0.12px;left:266.80px;">Report View by Selection</div>
<div style="position:absolute;top:441.85px;font-size:14px;line-height:14px;font-weight:bold;color:#15608f;white-space:nowrap;letter-spacing:0.10px;right:23.50px;">Customize</div>
<div style="position:absolute;left:246.00px;top:466.00px;width:714.00px;height:1.00px;background:#d9d9d9"></div>
<div style="position:absolute;left:246.00px;top:467.00px;width:710.00px;height:38.00px;background:#f4f4f4"></div>
<div style="position:absolute;left:246.00px;top:505.00px;width:710.00px;height:144.00px;background:#f9f9f9"></div>
<div style="position:absolute;left:246.00px;top:504.50px;width:710.00px;height:1.00px;background:#e6e6e6"></div>
<div style="position:absolute;left:246.00px;top:529.00px;width:710.00px;height:1.00px;background:#e6e6e6"></div>
<div style="position:absolute;left:246.00px;top:563.00px;width:710.00px;height:1.00px;background:#e6e6e6"></div>
<div style="position:absolute;left:246.00px;top:588.80px;width:710.00px;height:1.00px;background:#e6e6e6"></div>
<div style="position:absolute;left:246.00px;top:623.00px;width:710.00px;height:1.00px;background:#e6e6e6"></div>
<div style="position:absolute;left:246.00px;top:649.00px;width:710.00px;height:1.00px;background:#e6e6e6"></div>
<div style="position:absolute;top:470.65px;font-size:14px;line-height:14px;font-weight:bold;color:#2b2b2b;white-space:nowrap;left:259.50px;">Total:</div>
<div style="position:absolute;top:486.65px;font-size:14px;line-height:14px;font-weight:bold;color:#2b2b2b;white-space:nowrap;left:268.00px;">5</div>
<div style="position:absolute;top:479.15px;font-size:14px;line-height:14px;font-weight:bold;color:#2b2b2b;white-space:nowrap;letter-spacing:0.05px;left:325.60px;">Research Fields</div>
<div style="position:absolute;top:471.15px;font-size:14px;line-height:14px;font-weight:bold;color:#2b2b2b;white-space:nowrap;letter-spacing:0.10px;left:513.30px;width:140px;margin-left:-70px;text-align:center;">Web of Science</div>
<div style="position:absolute;top:487.15px;font-size:14px;line-height:14px;font-weight:bold;color:#2b2b2b;white-space:nowrap;letter-spacing:0.10px;left:509.00px;width:140px;margin-left:-70px;text-align:center;">Documents</div>
<div style="position:absolute;top:479.15px;font-size:14px;line-height:14px;font-weight:bold;color:#3f73a8;white-space:nowrap;letter-spacing:0.10px;left:604.90px;">Cites</div>
<svg style="position:absolute;left:642px;top:485px" width="9" height="5"><path d="M0.5,0.5 L8.5,0.5 L4.5,4.5Z" fill="#5b8fc7"/></svg>
<div style="position:absolute;top:479.15px;font-size:14px;line-height:14px;font-weight:bold;color:#2b2b2b;white-space:nowrap;letter-spacing:0.10px;left:703.50px;">Cites/Paper</div>
<div style="position:absolute;top:479.15px;font-size:14px;line-height:14px;font-weight:bold;color:#2b2b2b;white-space:nowrap;letter-spacing:-0.10px;left:838.70px;">Top Papers</div>
<div style="position:absolute;top:509.00px;font-size:13px;line-height:13px;font-weight:normal;color:#333;white-space:nowrap;right:660.50px;">1</div>
<div style="position:absolute;top:509.00px;font-size:13px;line-height:13px;font-weight:bold;color:#0f5a87;white-space:nowrap;letter-spacing:0.40px;left:326.50px;">GEOSCIENCES</div>
<div style="position:absolute;top:509.00px;font-size:13px;line-height:13px;font-weight:normal;color:#333;white-space:nowrap;letter-spacing:0.55px;right:392.20px;">2,739</div>
<div style="position:absolute;top:509.00px;font-size:13px;line-height:13px;font-weight:normal;color:#333;white-space:nowrap;letter-spacing:0.55px;right:280.70px;">18,682</div>
<div style="position:absolute;top:509.00px;font-size:13px;line-height:13px;font-weight:normal;color:#333;white-space:nowrap;letter-spacing:0.55px;right:163.50px;">6.82</div>
<div style="position:absolute;left:850.00px;top:507.00px;width:100.00px;height:18.00px;box-sizing:border-box;border:1px solid #5b8bd0;background:#e0e8f5"></div>
<div style="position:absolute;left:851.00px;top:508.00px;width:47.60px;height:16.00px;background:linear-gradient(#b0caee 0%,#8eb3e6 50%,#6c9edc 51%,#5d90d6 100%)"></div>
<div style="position:absolute;top:509.80px;font-size:13px;line-height:13px;font-weight:normal;color:#3a3a50;white-space:nowrap;letter-spacing:0.30px;right:14.40px;">34</div>
<div style="position:absolute;top:539.40px;font-size:13px;line-height:13px;font-weight:normal;color:#333;white-space:nowrap;right:660.50px;">2</div>
<div style="position:absolute;top:533.10px;font-size:13px;line-height:13px;font-weight:bold;color:#0f5a87;white-space:nowrap;letter-spacing:0.40px;left:326.50px;">COMPUTER</div>
<div style="position:absolute;top:545.60px;font-size:13px;line-height:13px;font-weight:bold;color:#0f5a87;white-space:nowrap;letter-spacing:0.40px;left:326.50px;">SCIENCE</div>
<div style="position:absolute;top:539.40px;font-size:13px;line-height:13px;font-weight:normal;color:#333;white-space:nowrap;letter-spacing:0.55px;right:392.20px;">877</div>
<div style="position:absolute;top:539.40px;font-size:13px;line-height:13px;font-weight:normal;color:#333;white-space:nowrap;letter-spacing:0.55px;right:280.70px;">9,926</div>
<div style="position:absolute;top:539.40px;font-size:13px;line-height:13px;font-weight:normal;color:#333;white-space:nowrap;letter-spacing:0.55px;right:163.50px;">11.32</div>
<div style="position:absolute;left:850.00px;top:537.00px;width:100.00px;height:18.00px;box-sizing:border-box;border:1px solid #5b8bd0;background:#e0e8f5"></div>
<div style="position:absolute;left:851.00px;top:538.00px;width:98.00px;height:16.00px;background:linear-gradient(#b0caee 0%,#8eb3e6 50%,#6c9edc 51%,#5d90d6 100%)"></div>
<div style="position:absolute;top:539.80px;font-size:13px;line-height:13px;font-weight:normal;color:#fff;white-space:nowrap;letter-spacing:0.30px;right:14.40px;">70</div>
<div style="position:absolute;top:568.95px;font-size:13px;line-height:13px;font-weight:normal;color:#333;white-space:nowrap;right:660.50px;">3</div>
<div style="position:absolute;top:568.95px;font-size:13px;line-height:13px;font-weight:bold;color:#0f5a87;white-space:nowrap;letter-spacing:0.40px;left:326.50px;">ENGINEERING</div>
<div style="position:absolute;top:568.95px;font-size:13px;line-height:13px;font-weight:normal;color:#333;white-space:nowrap;letter-spacing:0.55px;right:392.20px;">806</div>
<div style="position:absolute;top:568.95px;font-size:13px;line-height:13px;font-weight:normal;color:#333;white-space:nowrap;letter-spacing:0.55px;right:280.70px;">4,979</div>
<div style="position:absolute;top:568.95px;font-size:13px;line-height:13px;font-weight:normal;color:#333;white-space:nowrap;letter-spacing:0.55px;right:163.50px;">6.18</div>
<div style="position:absolute;left:850.00px;top:567.00px;width:100.00px;height:18.00px;box-sizing:border-box;border:1px solid #5b8bd0;background:#e0e8f5"></div>
<div style="position:absolute;left:851.00px;top:568.00px;width:23.80px;height:16.00px;background:linear-gradient(#b0caee 0%,#8eb3e6 50%,#6c9edc 51%,#5d90d6 100%)"></div>
<div style="position:absolute;top:569.80px;font-size:13px;line-height:13px;font-weight:normal;color:#3a3a50;white-space:nowrap;letter-spacing:0.30px;right:14.40px;">17</div>
<div style="position:absolute;top:599.10px;font-size:13px;line-height:13px;font-weight:normal;color:#333;white-space:nowrap;right:660.50px;">4</div>
<div style="position:absolute;top:593.30px;font-size:13px;line-height:13px;font-weight:bold;color:#0f5a87;white-space:nowrap;letter-spacing:0.40px;left:326.50px;">ENVIRONMENT/E</div>
<div style="position:absolute;top:606.10px;font-size:13px;line-height:13px;font-weight:bold;color:#0f5a87;white-space:nowrap;letter-spacing:0.40px;left:326.50px;">COLOGY</div>
<div style="position:absolute;top:599.10px;font-size:13px;line-height:13px;font-weight:normal;color:#333;white-space:nowrap;letter-spacing:0.55px;right:392.20px;">649</div>
<div style="position:absolute;top:599.10px;font-size:13px;line-height:13px;font-weight:normal;color:#333;white-space:nowrap;letter-spacing:0.55px;right:280.70px;">4,243</div>
<div style="position:absolute;top:599.10px;font-size:13px;line-height:13px;font-weight:normal;color:#333;white-space:nowrap;letter-spacing:0.55px;right:163.50px;">6.54</div>
<div style="position:absolute;left:850.00px;top:597.00px;width:100.00px;height:18.00px;box-sizing:border-box;border:1px solid #5b8bd0;background:#e0e8f5"></div>
<div style="position:absolute;left:851.00px;top:598.00px;width:4.20px;height:16.00px;background:linear-gradient(#b0caee 0%,#8eb3e6 50%,#6c9edc 51%,#5d90d6 100%)"></div>
<div style="position:absolute;top:599.80px;font-size:13px;line-height:13px;font-weight:normal;color:#3a3a50;white-space:nowrap;letter-spacing:0.30px;right:14.40px;">3</div>
<div style="position:absolute;top:629.20px;font-size:13px;line-height:13px;font-weight:normal;color:#333;white-space:nowrap;right:660.50px;">0</div>
<div style="position:absolute;top:629.20px;font-size:13px;line-height:13px;font-weight:bold;color:#0f5a87;white-space:nowrap;letter-spacing:0.40px;left:326.50px;">ALL FIELDS</div>
<div style="position:absolute;top:629.20px;font-size:13px;line-height:13px;font-weight:normal;color:#333;white-space:nowrap;letter-spacing:0.55px;right:392.20px;">7,531</div>
<div style="position:absolute;top:629.20px;font-size:13px;line-height:13px;font-weight:normal;color:#333;white-space:nowrap;letter-spacing:0.55px;right:280.70px;">52,286</div>
<div style="position:absolute;top:629.20px;font-size:13px;line-height:13px;font-weight:normal;color:#333;white-space:nowrap;letter-spacing:0.55px;right:163.50px;">6.94</div>
<div style="position:absolute;left:850.00px;top:627.00px;width:100.00px;height:18.00px;box-sizing:border-box;border:1px solid #5b8bd0;background:#e0e8f5"></div>
<div style="position:absolute;left:851.00px;top:628.00px;width:98.00px;height:16.00px;background:linear-gradient(#b0caee 0%,#8eb3e6 50%,#6c9edc 51%,#5d90d6 100%)"></div>
<div style="position:absolute;top:629.80px;font-size:13px;line-height:13px;font-weight:normal;color:#fff;white-space:nowrap;letter-spacing:0.30px;right:14.40px;">148</div>
<div style="position:absolute;left:249.40px;top:587.30px;width:707.20px;height:35.40px;box-sizing:border-box;border:1px solid #e03a3a"></div>
<div style="position:absolute;left:0.00px;top:671.00px;width:961.00px;height:1.00px;background:#dadada"></div>
</body></html>
